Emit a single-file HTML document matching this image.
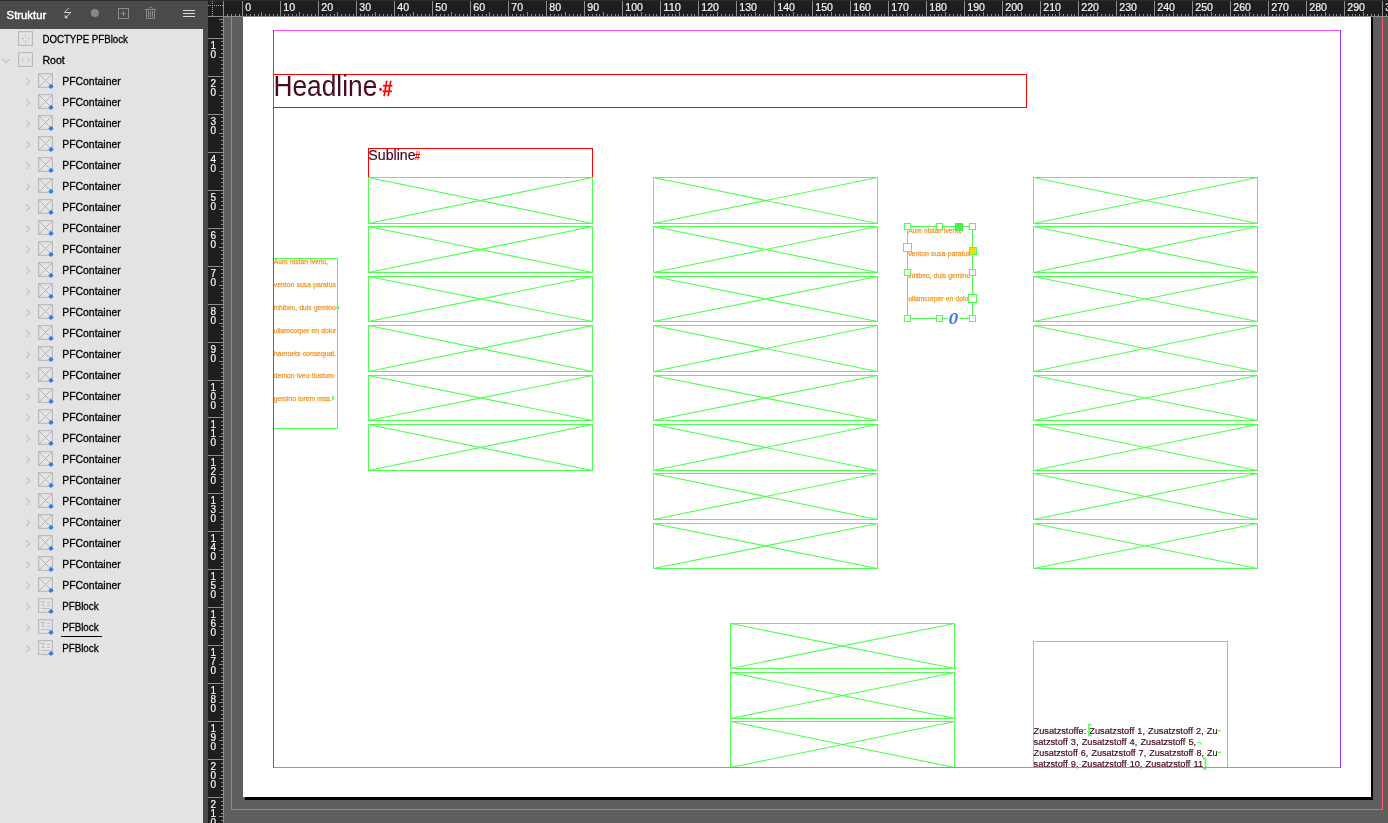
<!DOCTYPE html>
<html><head><meta charset="utf-8"><title>Struktur</title>
<style>
html,body{margin:0;padding:0;background:#5e5e5e}
body{width:1388px;height:823px;overflow:hidden;position:relative}
svg{position:absolute;left:0;top:0;display:block;will-change:transform}
text{font-family:"Liberation Sans",sans-serif}
.c{shape-rendering:crispEdges}
</style></head><body>
<svg width="1388" height="823" viewBox="0 0 1388 823">
<rect class="c" x="0" y="0" width="1388" height="823" fill="#5e5e5e"/>
<rect class="c" x="245" y="17" width="1128" height="783" fill="#000"/>
<rect class="c" x="243" y="0" width="1128" height="797" fill="#fff"/>
<rect class="c" x="231" y="17" width="1" height="793" fill="#ff5a69"/>
<rect class="c" x="1382" y="17" width="1" height="793" fill="#ff5a69"/>
<rect class="c" x="231" y="809" width="1152" height="1" fill="#ff5a69"/>
<rect class="c" x="273.5" y="74.5" width="753" height="33" fill="none" stroke="#ff0000" stroke-width="1"/>
<rect class="c" x="368.5" y="148.5" width="224" height="29" fill="none" stroke="#ff0000" stroke-width="1"/>
<rect class="c" x="368.5" y="177.5" width="224" height="46" fill="none" stroke="#4fff4f" stroke-width="1"/>
<path d="M368.5 177.5L592.5 223.5M368.5 223.5L592.5 177.5" stroke="#4fff4f" stroke-width="1.15" fill="none"/>
<rect class="c" x="368.5" y="226.5" width="224" height="46" fill="none" stroke="#4fff4f" stroke-width="1"/>
<path d="M368.5 226.5L592.5 272.5M368.5 272.5L592.5 226.5" stroke="#4fff4f" stroke-width="1.15" fill="none"/>
<rect class="c" x="368.5" y="276.5" width="224" height="45" fill="none" stroke="#4fff4f" stroke-width="1"/>
<path d="M368.5 276.5L592.5 321.5M368.5 321.5L592.5 276.5" stroke="#4fff4f" stroke-width="1.15" fill="none"/>
<rect class="c" x="368.5" y="325.5" width="224" height="46" fill="none" stroke="#4fff4f" stroke-width="1"/>
<path d="M368.5 325.5L592.5 371.5M368.5 371.5L592.5 325.5" stroke="#4fff4f" stroke-width="1.15" fill="none"/>
<rect class="c" x="368.5" y="375.5" width="224" height="45" fill="none" stroke="#4fff4f" stroke-width="1"/>
<path d="M368.5 375.5L592.5 420.5M368.5 420.5L592.5 375.5" stroke="#4fff4f" stroke-width="1.15" fill="none"/>
<rect class="c" x="368.5" y="424.5" width="224" height="46" fill="none" stroke="#4fff4f" stroke-width="1"/>
<path d="M368.5 424.5L592.5 470.5M368.5 470.5L592.5 424.5" stroke="#4fff4f" stroke-width="1.15" fill="none"/>
<rect class="c" x="653.5" y="177.5" width="224" height="46" fill="none" stroke="#4fff4f" stroke-width="1"/>
<path d="M653.5 177.5L877.5 223.5M653.5 223.5L877.5 177.5" stroke="#4fff4f" stroke-width="1.15" fill="none"/>
<rect class="c" x="653.5" y="226.5" width="224" height="46" fill="none" stroke="#4fff4f" stroke-width="1"/>
<path d="M653.5 226.5L877.5 272.5M653.5 272.5L877.5 226.5" stroke="#4fff4f" stroke-width="1.15" fill="none"/>
<rect class="c" x="653.5" y="276.5" width="224" height="45" fill="none" stroke="#4fff4f" stroke-width="1"/>
<path d="M653.5 276.5L877.5 321.5M653.5 321.5L877.5 276.5" stroke="#4fff4f" stroke-width="1.15" fill="none"/>
<rect class="c" x="653.5" y="325.5" width="224" height="46" fill="none" stroke="#4fff4f" stroke-width="1"/>
<path d="M653.5 325.5L877.5 371.5M653.5 371.5L877.5 325.5" stroke="#4fff4f" stroke-width="1.15" fill="none"/>
<rect class="c" x="653.5" y="375.5" width="224" height="45" fill="none" stroke="#4fff4f" stroke-width="1"/>
<path d="M653.5 375.5L877.5 420.5M653.5 420.5L877.5 375.5" stroke="#4fff4f" stroke-width="1.15" fill="none"/>
<rect class="c" x="653.5" y="424.5" width="224" height="46" fill="none" stroke="#4fff4f" stroke-width="1"/>
<path d="M653.5 424.5L877.5 470.5M653.5 470.5L877.5 424.5" stroke="#4fff4f" stroke-width="1.15" fill="none"/>
<rect class="c" x="653.5" y="473.5" width="224" height="46" fill="none" stroke="#4fff4f" stroke-width="1"/>
<path d="M653.5 473.5L877.5 519.5M653.5 519.5L877.5 473.5" stroke="#4fff4f" stroke-width="1.15" fill="none"/>
<rect class="c" x="653.5" y="523.5" width="224" height="45" fill="none" stroke="#4fff4f" stroke-width="1"/>
<path d="M653.5 523.5L877.5 568.5M653.5 568.5L877.5 523.5" stroke="#4fff4f" stroke-width="1.15" fill="none"/>
<rect class="c" x="1033.5" y="177.5" width="224" height="46" fill="none" stroke="#4fff4f" stroke-width="1"/>
<path d="M1033.5 177.5L1257.5 223.5M1033.5 223.5L1257.5 177.5" stroke="#4fff4f" stroke-width="1.15" fill="none"/>
<rect class="c" x="1033.5" y="226.5" width="224" height="46" fill="none" stroke="#4fff4f" stroke-width="1"/>
<path d="M1033.5 226.5L1257.5 272.5M1033.5 272.5L1257.5 226.5" stroke="#4fff4f" stroke-width="1.15" fill="none"/>
<rect class="c" x="1033.5" y="276.5" width="224" height="45" fill="none" stroke="#4fff4f" stroke-width="1"/>
<path d="M1033.5 276.5L1257.5 321.5M1033.5 321.5L1257.5 276.5" stroke="#4fff4f" stroke-width="1.15" fill="none"/>
<rect class="c" x="1033.5" y="325.5" width="224" height="46" fill="none" stroke="#4fff4f" stroke-width="1"/>
<path d="M1033.5 325.5L1257.5 371.5M1033.5 371.5L1257.5 325.5" stroke="#4fff4f" stroke-width="1.15" fill="none"/>
<rect class="c" x="1033.5" y="375.5" width="224" height="45" fill="none" stroke="#4fff4f" stroke-width="1"/>
<path d="M1033.5 375.5L1257.5 420.5M1033.5 420.5L1257.5 375.5" stroke="#4fff4f" stroke-width="1.15" fill="none"/>
<rect class="c" x="1033.5" y="424.5" width="224" height="46" fill="none" stroke="#4fff4f" stroke-width="1"/>
<path d="M1033.5 424.5L1257.5 470.5M1033.5 470.5L1257.5 424.5" stroke="#4fff4f" stroke-width="1.15" fill="none"/>
<rect class="c" x="1033.5" y="473.5" width="224" height="46" fill="none" stroke="#4fff4f" stroke-width="1"/>
<path d="M1033.5 473.5L1257.5 519.5M1033.5 519.5L1257.5 473.5" stroke="#4fff4f" stroke-width="1.15" fill="none"/>
<rect class="c" x="1033.5" y="523.5" width="224" height="45" fill="none" stroke="#4fff4f" stroke-width="1"/>
<path d="M1033.5 523.5L1257.5 568.5M1033.5 568.5L1257.5 523.5" stroke="#4fff4f" stroke-width="1.15" fill="none"/>
<rect class="c" x="730.5" y="623.5" width="224" height="45" fill="none" stroke="#4fff4f" stroke-width="1"/>
<path d="M730.5 623.5L954.5 668.5M730.5 668.5L954.5 623.5" stroke="#4fff4f" stroke-width="1.15" fill="none"/>
<rect class="c" x="730.5" y="672.5" width="224" height="46" fill="none" stroke="#4fff4f" stroke-width="1"/>
<path d="M730.5 672.5L954.5 718.5M730.5 718.5L954.5 672.5" stroke="#4fff4f" stroke-width="1.15" fill="none"/>
<rect class="c" x="730.5" y="721.5" width="224" height="46" fill="none" stroke="#4fff4f" stroke-width="1"/>
<path d="M730.5 721.5L954.5 767.5M730.5 767.5L954.5 721.5" stroke="#4fff4f" stroke-width="1.15" fill="none"/>
<rect class="c" x="273.5" y="258.5" width="64" height="170" fill="none" stroke="#4fff4f" stroke-width="1"/>
<rect class="c" x="1033.5" y="641.5" width="194" height="126" fill="none" stroke="#4fff4f" stroke-width="1"/>
<text x="273.5" y="95.9" font-size="29.9" fill="#4a0a1f" textLength="103.8" lengthAdjust="spacingAndGlyphs">Headline</text>
<circle cx="380.5" cy="89.5" r="1.45" fill="#ff0000"/>
<text x="382.6" y="95.9" font-size="22.4" font-weight="bold" fill="#ff0000" stroke="#ff0000" stroke-width="0.3" textLength="9.9" lengthAdjust="spacingAndGlyphs">#</text>
<text x="368.3" y="160" font-size="14.8" fill="#4a0a1f" stroke="#4a0a1f" stroke-width="0.2" textLength="47.3" lengthAdjust="spacingAndGlyphs">Subline</text>
<text x="414.7" y="160" font-size="12.7" font-weight="bold" fill="#ff0000" textLength="5.5" lengthAdjust="spacingAndGlyphs">#</text>
<text x="273.8" y="264.1" font-size="6.9" fill="#f2982e" stroke="#f2982e" stroke-width="0.25" textLength="56.6" lengthAdjust="spacingAndGlyphs">Aum<tspan fill="#4fff4f" stroke="none">·</tspan>nistan<tspan fill="#4fff4f" stroke="none">·</tspan>iverio,<tspan fill="#4fff4f" stroke="none">·</tspan></text>
<text x="273.8" y="286.95" font-size="6.9" fill="#f2982e" stroke="#f2982e" stroke-width="0.25" textLength="64.4" lengthAdjust="spacingAndGlyphs">venton<tspan fill="#4fff4f" stroke="none">·</tspan>susa<tspan fill="#4fff4f" stroke="none">·</tspan>paratus<tspan fill="#4fff4f" stroke="none">·</tspan></text>
<text x="273.8" y="309.8" font-size="6.9" fill="#f2982e" stroke="#f2982e" stroke-width="0.25" textLength="62" lengthAdjust="spacingAndGlyphs">inhibeo,<tspan fill="#4fff4f" stroke="none">·</tspan>duis<tspan fill="#4fff4f" stroke="none">·</tspan>gemino</text>
<text x="273.8" y="332.65" font-size="6.9" fill="#f2982e" stroke="#f2982e" stroke-width="0.25" textLength="62.5" lengthAdjust="spacingAndGlyphs">ullamcorper<tspan fill="#4fff4f" stroke="none">·</tspan>en<tspan fill="#4fff4f" stroke="none">·</tspan>dolor</text>
<text x="273.8" y="355.5" font-size="6.9" fill="#f2982e" stroke="#f2982e" stroke-width="0.25" textLength="64.6" lengthAdjust="spacingAndGlyphs">haeroets<tspan fill="#4fff4f" stroke="none">·</tspan>consequat.<tspan fill="#4fff4f" stroke="none">·</tspan></text>
<text x="273.8" y="378.35" font-size="6.9" fill="#f2982e" stroke="#f2982e" stroke-width="0.25" textLength="62.2" lengthAdjust="spacingAndGlyphs">demon<tspan fill="#4fff4f" stroke="none">·</tspan>iveo<tspan fill="#4fff4f" stroke="none">·</tspan>tiustum<tspan fill="#4fff4f" stroke="none">·</tspan></text>
<text x="273.8" y="401.2" font-size="6.9" fill="#f2982e" stroke="#f2982e" stroke-width="0.25" textLength="58.2" lengthAdjust="spacingAndGlyphs">gemino<tspan fill="#4fff4f" stroke="none">·</tspan>lorem<tspan fill="#4fff4f" stroke="none">·</tspan>mas.</text>
<rect x="336.5" y="306.5" width="2.5" height="2.5" fill="#4fff4f"/>
<rect x="332" y="396" width="1.6" height="4" fill="#4fff4f"/>
<text x="908.2" y="232.6" font-size="6.9" fill="#f2982e" stroke="#f2982e" stroke-width="0.25" textLength="53.5" lengthAdjust="spacingAndGlyphs">Aum<tspan fill="#4fff4f" stroke="none">·</tspan>nistan<tspan fill="#4fff4f" stroke="none">·</tspan>iverio,</text>
<text x="908.2" y="255.6" font-size="6.9" fill="#f2982e" stroke="#f2982e" stroke-width="0.25" textLength="62.5" lengthAdjust="spacingAndGlyphs">venton<tspan fill="#4fff4f" stroke="none">·</tspan>susa<tspan fill="#4fff4f" stroke="none">·</tspan>paratus</text>
<text x="908.2" y="278.4" font-size="6.9" fill="#f2982e" stroke="#f2982e" stroke-width="0.25" textLength="62" lengthAdjust="spacingAndGlyphs">inhibeo,<tspan fill="#4fff4f" stroke="none">·</tspan>duis<tspan fill="#4fff4f" stroke="none">·</tspan>gemino</text>
<text x="908.2" y="300.8" font-size="6.9" fill="#f2982e" stroke="#f2982e" stroke-width="0.25" textLength="60" lengthAdjust="spacingAndGlyphs">ullamcorper<tspan fill="#4fff4f" stroke="none">·</tspan>en<tspan fill="#4fff4f" stroke="none">·</tspan>dolo</text>
<rect class="c" x="907.5" y="226.5" width="65" height="92" fill="none" stroke="#4fff4f" stroke-width="1"/>
<rect class="c" x="904.5" y="223.5" width="6" height="6" fill="#fff" stroke="#4fff4f" stroke-width="1"/>
<rect class="c" x="936.5" y="223.5" width="6" height="6" fill="#fff" stroke="#4fff4f" stroke-width="1"/>
<rect class="c" x="969.5" y="223.5" width="6" height="6" fill="#fff" stroke="#4fff4f" stroke-width="1"/>
<rect class="c" x="904.5" y="269.5" width="6" height="6" fill="#fff" stroke="#4fff4f" stroke-width="1"/>
<rect class="c" x="969.5" y="269.5" width="6" height="6" fill="#fff" stroke="#4fff4f" stroke-width="1"/>
<rect class="c" x="904.5" y="315.5" width="6" height="6" fill="#fff" stroke="#4fff4f" stroke-width="1"/>
<rect class="c" x="936.5" y="315.5" width="6" height="6" fill="#fff" stroke="#4fff4f" stroke-width="1"/>
<rect class="c" x="969.5" y="315.5" width="6" height="6" fill="#fff" stroke="#4fff4f" stroke-width="1"/>
<rect class="c" x="903.5" y="243.5" width="8" height="8" fill="#fff" stroke="#4fff4f" stroke-width="1"/>
<rect class="c" x="968.5" y="294.5" width="8" height="8" fill="#fff" stroke="#4fff4f" stroke-width="1"/>
<rect class="c" x="955" y="223" width="8" height="8" fill="#4cf04c"/>
<rect class="c" x="969.5" y="247.5" width="7" height="7" fill="#ffdc00" stroke="#4fff4f" stroke-width="1"/>
<rect x="947" y="314" width="12.5" height="10" fill="#fff"/>
<text x="948.4" y="323.6" font-size="16" font-style="italic" font-weight="bold" textLength="9.8" lengthAdjust="spacingAndGlyphs" style="font-family:'Liberation Serif',serif" fill="#3d7fe0">0</text>
<text x="1033.6" y="734.4" font-size="9.6" fill="#4a0a1f" stroke="#4a0a1f" stroke-width="0.2" textLength="184" lengthAdjust="spacingAndGlyphs">Zusatzstoffe:<tspan fill="#4fff4f" stroke="none">·</tspan>Zusatzstoff<tspan fill="#4fff4f" stroke="none">·</tspan>1,<tspan fill="#4fff4f" stroke="none">·</tspan>Zusatzstoff<tspan fill="#4fff4f" stroke="none">·</tspan>2,<tspan fill="#4fff4f" stroke="none">·</tspan>Zu</text>
<text x="1033.6" y="745.25" font-size="9.6" fill="#4a0a1f" stroke="#4a0a1f" stroke-width="0.2" textLength="162.5" lengthAdjust="spacingAndGlyphs">satzstoff<tspan fill="#4fff4f" stroke="none">·</tspan>3,<tspan fill="#4fff4f" stroke="none">·</tspan>Zusatzstoff<tspan fill="#4fff4f" stroke="none">·</tspan>4,<tspan fill="#4fff4f" stroke="none">·</tspan>Zusatzstoff<tspan fill="#4fff4f" stroke="none">·</tspan>5,</text>
<text x="1033.6" y="756.1" font-size="9.6" fill="#4a0a1f" stroke="#4a0a1f" stroke-width="0.2" textLength="184" lengthAdjust="spacingAndGlyphs">Zusatzstoff<tspan fill="#4fff4f" stroke="none">·</tspan>6,<tspan fill="#4fff4f" stroke="none">·</tspan>Zusatzstoff<tspan fill="#4fff4f" stroke="none">·</tspan>7,<tspan fill="#4fff4f" stroke="none">·</tspan>Zusatzstoff<tspan fill="#4fff4f" stroke="none">·</tspan>8,<tspan fill="#4fff4f" stroke="none">·</tspan>Zu</text>
<text x="1033.6" y="766.95" font-size="9.6" fill="#4a0a1f" stroke="#4a0a1f" stroke-width="0.2" textLength="169.5" lengthAdjust="spacingAndGlyphs">satzstoff<tspan fill="#4fff4f" stroke="none">·</tspan>9,<tspan fill="#4fff4f" stroke="none">·</tspan>Zusatzstoff<tspan fill="#4fff4f" stroke="none">·</tspan>10,<tspan fill="#4fff4f" stroke="none">·</tspan>Zusatzstoff<tspan fill="#4fff4f" stroke="none">·</tspan>11</text>
<path d="M1091.5 724.5H1089V735.5H1091.5" stroke="#4fff4f" stroke-width="1.6" fill="none"/>
<path d="M1203 758.5H1205.5V769H1203" stroke="#4fff4f" stroke-width="1.6" fill="none"/>
<rect x="1218" y="730" width="3" height="1.3" fill="#4fff4f"/>
<rect x="1218" y="751.8" width="3" height="1.3" fill="#4fff4f"/>
<path d="M1197.5 742.5H1201V744.5" stroke="#4fff4f" stroke-width="1" fill="none"/>
<rect class="c" x="273" y="30" width="1068" height="1" fill="#ff4fff"/>
<rect class="c" x="273" y="767" width="1068" height="1" fill="#ff4fff"/>
<rect class="c" x="273" y="30" width="1" height="738" fill="#9933ff"/>
<rect class="c" x="1340" y="30" width="1" height="738" fill="#9933ff"/>
<rect class="c" x="208" y="0" width="1180" height="17" fill="#1e1e1e"/>
<rect class="c" x="208" y="17" width="16" height="806" fill="#1e1e1e"/>
<rect class="c" x="0" y="0" width="1388" height="1" fill="#2d2d2d"/>
<rect class="c" x="227" y="14" width="1" height="3" fill="#8e8e8e"/>
<rect class="c" x="231" y="14" width="1" height="3" fill="#8e8e8e"/>
<rect class="c" x="235" y="14" width="1" height="3" fill="#8e8e8e"/>
<rect class="c" x="239" y="14" width="1" height="3" fill="#8e8e8e"/>
<rect class="c" x="242" y="1" width="1" height="16" fill="#8e8e8e"/>
<text x="245.3" y="11.1" font-size="11.2" fill="#f6f6f6" stroke="#f6f6f6" stroke-width="0.2" textLength="5.9" lengthAdjust="spacingAndGlyphs">0</text>
<rect class="c" x="246" y="14" width="1" height="3" fill="#8e8e8e"/>
<rect class="c" x="250" y="14" width="1" height="3" fill="#8e8e8e"/>
<rect class="c" x="254" y="14" width="1" height="3" fill="#8e8e8e"/>
<rect class="c" x="258" y="14" width="1" height="3" fill="#8e8e8e"/>
<rect class="c" x="261" y="12" width="1" height="5" fill="#8e8e8e"/>
<rect class="c" x="265" y="14" width="1" height="3" fill="#8e8e8e"/>
<rect class="c" x="269" y="14" width="1" height="3" fill="#8e8e8e"/>
<rect class="c" x="273" y="14" width="1" height="3" fill="#8e8e8e"/>
<rect class="c" x="277" y="14" width="1" height="3" fill="#8e8e8e"/>
<rect class="c" x="280" y="1" width="1" height="16" fill="#8e8e8e"/>
<text x="283.3" y="11.1" font-size="11.2" fill="#f6f6f6" stroke="#f6f6f6" stroke-width="0.2" textLength="11.8" lengthAdjust="spacingAndGlyphs">10</text>
<rect class="c" x="284" y="14" width="1" height="3" fill="#8e8e8e"/>
<rect class="c" x="288" y="14" width="1" height="3" fill="#8e8e8e"/>
<rect class="c" x="292" y="14" width="1" height="3" fill="#8e8e8e"/>
<rect class="c" x="296" y="14" width="1" height="3" fill="#8e8e8e"/>
<rect class="c" x="299" y="12" width="1" height="5" fill="#8e8e8e"/>
<rect class="c" x="303" y="14" width="1" height="3" fill="#8e8e8e"/>
<rect class="c" x="307" y="14" width="1" height="3" fill="#8e8e8e"/>
<rect class="c" x="311" y="14" width="1" height="3" fill="#8e8e8e"/>
<rect class="c" x="315" y="14" width="1" height="3" fill="#8e8e8e"/>
<rect class="c" x="318" y="1" width="1" height="16" fill="#8e8e8e"/>
<text x="321.3" y="11.1" font-size="11.2" fill="#f6f6f6" stroke="#f6f6f6" stroke-width="0.2" textLength="11.8" lengthAdjust="spacingAndGlyphs">20</text>
<rect class="c" x="322" y="14" width="1" height="3" fill="#8e8e8e"/>
<rect class="c" x="326" y="14" width="1" height="3" fill="#8e8e8e"/>
<rect class="c" x="330" y="14" width="1" height="3" fill="#8e8e8e"/>
<rect class="c" x="334" y="14" width="1" height="3" fill="#8e8e8e"/>
<rect class="c" x="337" y="12" width="1" height="5" fill="#8e8e8e"/>
<rect class="c" x="341" y="14" width="1" height="3" fill="#8e8e8e"/>
<rect class="c" x="345" y="14" width="1" height="3" fill="#8e8e8e"/>
<rect class="c" x="349" y="14" width="1" height="3" fill="#8e8e8e"/>
<rect class="c" x="353" y="14" width="1" height="3" fill="#8e8e8e"/>
<rect class="c" x="356" y="1" width="1" height="16" fill="#8e8e8e"/>
<text x="359.3" y="11.1" font-size="11.2" fill="#f6f6f6" stroke="#f6f6f6" stroke-width="0.2" textLength="11.8" lengthAdjust="spacingAndGlyphs">30</text>
<rect class="c" x="360" y="14" width="1" height="3" fill="#8e8e8e"/>
<rect class="c" x="364" y="14" width="1" height="3" fill="#8e8e8e"/>
<rect class="c" x="368" y="14" width="1" height="3" fill="#8e8e8e"/>
<rect class="c" x="372" y="14" width="1" height="3" fill="#8e8e8e"/>
<rect class="c" x="375" y="12" width="1" height="5" fill="#8e8e8e"/>
<rect class="c" x="379" y="14" width="1" height="3" fill="#8e8e8e"/>
<rect class="c" x="383" y="14" width="1" height="3" fill="#8e8e8e"/>
<rect class="c" x="387" y="14" width="1" height="3" fill="#8e8e8e"/>
<rect class="c" x="391" y="14" width="1" height="3" fill="#8e8e8e"/>
<rect class="c" x="394" y="1" width="1" height="16" fill="#8e8e8e"/>
<text x="397.3" y="11.1" font-size="11.2" fill="#f6f6f6" stroke="#f6f6f6" stroke-width="0.2" textLength="11.8" lengthAdjust="spacingAndGlyphs">40</text>
<rect class="c" x="398" y="14" width="1" height="3" fill="#8e8e8e"/>
<rect class="c" x="402" y="14" width="1" height="3" fill="#8e8e8e"/>
<rect class="c" x="406" y="14" width="1" height="3" fill="#8e8e8e"/>
<rect class="c" x="410" y="14" width="1" height="3" fill="#8e8e8e"/>
<rect class="c" x="413" y="12" width="1" height="5" fill="#8e8e8e"/>
<rect class="c" x="417" y="14" width="1" height="3" fill="#8e8e8e"/>
<rect class="c" x="421" y="14" width="1" height="3" fill="#8e8e8e"/>
<rect class="c" x="425" y="14" width="1" height="3" fill="#8e8e8e"/>
<rect class="c" x="429" y="14" width="1" height="3" fill="#8e8e8e"/>
<rect class="c" x="432" y="1" width="1" height="16" fill="#8e8e8e"/>
<text x="435.3" y="11.1" font-size="11.2" fill="#f6f6f6" stroke="#f6f6f6" stroke-width="0.2" textLength="11.8" lengthAdjust="spacingAndGlyphs">50</text>
<rect class="c" x="436" y="14" width="1" height="3" fill="#8e8e8e"/>
<rect class="c" x="440" y="14" width="1" height="3" fill="#8e8e8e"/>
<rect class="c" x="444" y="14" width="1" height="3" fill="#8e8e8e"/>
<rect class="c" x="448" y="14" width="1" height="3" fill="#8e8e8e"/>
<rect class="c" x="451" y="12" width="1" height="5" fill="#8e8e8e"/>
<rect class="c" x="455" y="14" width="1" height="3" fill="#8e8e8e"/>
<rect class="c" x="459" y="14" width="1" height="3" fill="#8e8e8e"/>
<rect class="c" x="463" y="14" width="1" height="3" fill="#8e8e8e"/>
<rect class="c" x="467" y="14" width="1" height="3" fill="#8e8e8e"/>
<rect class="c" x="470" y="1" width="1" height="16" fill="#8e8e8e"/>
<text x="473.3" y="11.1" font-size="11.2" fill="#f6f6f6" stroke="#f6f6f6" stroke-width="0.2" textLength="11.8" lengthAdjust="spacingAndGlyphs">60</text>
<rect class="c" x="474" y="14" width="1" height="3" fill="#8e8e8e"/>
<rect class="c" x="478" y="14" width="1" height="3" fill="#8e8e8e"/>
<rect class="c" x="482" y="14" width="1" height="3" fill="#8e8e8e"/>
<rect class="c" x="486" y="14" width="1" height="3" fill="#8e8e8e"/>
<rect class="c" x="489" y="12" width="1" height="5" fill="#8e8e8e"/>
<rect class="c" x="493" y="14" width="1" height="3" fill="#8e8e8e"/>
<rect class="c" x="497" y="14" width="1" height="3" fill="#8e8e8e"/>
<rect class="c" x="501" y="14" width="1" height="3" fill="#8e8e8e"/>
<rect class="c" x="505" y="14" width="1" height="3" fill="#8e8e8e"/>
<rect class="c" x="508" y="1" width="1" height="16" fill="#8e8e8e"/>
<text x="511.3" y="11.1" font-size="11.2" fill="#f6f6f6" stroke="#f6f6f6" stroke-width="0.2" textLength="11.8" lengthAdjust="spacingAndGlyphs">70</text>
<rect class="c" x="512" y="14" width="1" height="3" fill="#8e8e8e"/>
<rect class="c" x="516" y="14" width="1" height="3" fill="#8e8e8e"/>
<rect class="c" x="520" y="14" width="1" height="3" fill="#8e8e8e"/>
<rect class="c" x="523" y="14" width="1" height="3" fill="#8e8e8e"/>
<rect class="c" x="527" y="12" width="1" height="5" fill="#8e8e8e"/>
<rect class="c" x="531" y="14" width="1" height="3" fill="#8e8e8e"/>
<rect class="c" x="535" y="14" width="1" height="3" fill="#8e8e8e"/>
<rect class="c" x="539" y="14" width="1" height="3" fill="#8e8e8e"/>
<rect class="c" x="542" y="14" width="1" height="3" fill="#8e8e8e"/>
<rect class="c" x="546" y="1" width="1" height="16" fill="#8e8e8e"/>
<text x="549.3" y="11.1" font-size="11.2" fill="#f6f6f6" stroke="#f6f6f6" stroke-width="0.2" textLength="11.8" lengthAdjust="spacingAndGlyphs">80</text>
<rect class="c" x="550" y="14" width="1" height="3" fill="#8e8e8e"/>
<rect class="c" x="554" y="14" width="1" height="3" fill="#8e8e8e"/>
<rect class="c" x="558" y="14" width="1" height="3" fill="#8e8e8e"/>
<rect class="c" x="561" y="14" width="1" height="3" fill="#8e8e8e"/>
<rect class="c" x="565" y="12" width="1" height="5" fill="#8e8e8e"/>
<rect class="c" x="569" y="14" width="1" height="3" fill="#8e8e8e"/>
<rect class="c" x="573" y="14" width="1" height="3" fill="#8e8e8e"/>
<rect class="c" x="577" y="14" width="1" height="3" fill="#8e8e8e"/>
<rect class="c" x="580" y="14" width="1" height="3" fill="#8e8e8e"/>
<rect class="c" x="584" y="1" width="1" height="16" fill="#8e8e8e"/>
<text x="587.3" y="11.1" font-size="11.2" fill="#f6f6f6" stroke="#f6f6f6" stroke-width="0.2" textLength="11.8" lengthAdjust="spacingAndGlyphs">90</text>
<rect class="c" x="588" y="14" width="1" height="3" fill="#8e8e8e"/>
<rect class="c" x="592" y="14" width="1" height="3" fill="#8e8e8e"/>
<rect class="c" x="596" y="14" width="1" height="3" fill="#8e8e8e"/>
<rect class="c" x="599" y="14" width="1" height="3" fill="#8e8e8e"/>
<rect class="c" x="603" y="12" width="1" height="5" fill="#8e8e8e"/>
<rect class="c" x="607" y="14" width="1" height="3" fill="#8e8e8e"/>
<rect class="c" x="611" y="14" width="1" height="3" fill="#8e8e8e"/>
<rect class="c" x="615" y="14" width="1" height="3" fill="#8e8e8e"/>
<rect class="c" x="618" y="14" width="1" height="3" fill="#8e8e8e"/>
<rect class="c" x="622" y="1" width="1" height="16" fill="#8e8e8e"/>
<text x="625.3" y="11.1" font-size="11.2" fill="#f6f6f6" stroke="#f6f6f6" stroke-width="0.2" textLength="17.7" lengthAdjust="spacingAndGlyphs">100</text>
<rect class="c" x="626" y="14" width="1" height="3" fill="#8e8e8e"/>
<rect class="c" x="630" y="14" width="1" height="3" fill="#8e8e8e"/>
<rect class="c" x="634" y="14" width="1" height="3" fill="#8e8e8e"/>
<rect class="c" x="637" y="14" width="1" height="3" fill="#8e8e8e"/>
<rect class="c" x="641" y="12" width="1" height="5" fill="#8e8e8e"/>
<rect class="c" x="645" y="14" width="1" height="3" fill="#8e8e8e"/>
<rect class="c" x="649" y="14" width="1" height="3" fill="#8e8e8e"/>
<rect class="c" x="653" y="14" width="1" height="3" fill="#8e8e8e"/>
<rect class="c" x="656" y="14" width="1" height="3" fill="#8e8e8e"/>
<rect class="c" x="660" y="1" width="1" height="16" fill="#8e8e8e"/>
<text x="663.3" y="11.1" font-size="11.2" fill="#f6f6f6" stroke="#f6f6f6" stroke-width="0.2" textLength="17.7" lengthAdjust="spacingAndGlyphs">110</text>
<rect class="c" x="664" y="14" width="1" height="3" fill="#8e8e8e"/>
<rect class="c" x="668" y="14" width="1" height="3" fill="#8e8e8e"/>
<rect class="c" x="672" y="14" width="1" height="3" fill="#8e8e8e"/>
<rect class="c" x="675" y="14" width="1" height="3" fill="#8e8e8e"/>
<rect class="c" x="679" y="12" width="1" height="5" fill="#8e8e8e"/>
<rect class="c" x="683" y="14" width="1" height="3" fill="#8e8e8e"/>
<rect class="c" x="687" y="14" width="1" height="3" fill="#8e8e8e"/>
<rect class="c" x="691" y="14" width="1" height="3" fill="#8e8e8e"/>
<rect class="c" x="694" y="14" width="1" height="3" fill="#8e8e8e"/>
<rect class="c" x="698" y="1" width="1" height="16" fill="#8e8e8e"/>
<text x="701.3" y="11.1" font-size="11.2" fill="#f6f6f6" stroke="#f6f6f6" stroke-width="0.2" textLength="17.7" lengthAdjust="spacingAndGlyphs">120</text>
<rect class="c" x="702" y="14" width="1" height="3" fill="#8e8e8e"/>
<rect class="c" x="706" y="14" width="1" height="3" fill="#8e8e8e"/>
<rect class="c" x="710" y="14" width="1" height="3" fill="#8e8e8e"/>
<rect class="c" x="713" y="14" width="1" height="3" fill="#8e8e8e"/>
<rect class="c" x="717" y="12" width="1" height="5" fill="#8e8e8e"/>
<rect class="c" x="721" y="14" width="1" height="3" fill="#8e8e8e"/>
<rect class="c" x="725" y="14" width="1" height="3" fill="#8e8e8e"/>
<rect class="c" x="729" y="14" width="1" height="3" fill="#8e8e8e"/>
<rect class="c" x="732" y="14" width="1" height="3" fill="#8e8e8e"/>
<rect class="c" x="736" y="1" width="1" height="16" fill="#8e8e8e"/>
<text x="739.3" y="11.1" font-size="11.2" fill="#f6f6f6" stroke="#f6f6f6" stroke-width="0.2" textLength="17.7" lengthAdjust="spacingAndGlyphs">130</text>
<rect class="c" x="740" y="14" width="1" height="3" fill="#8e8e8e"/>
<rect class="c" x="744" y="14" width="1" height="3" fill="#8e8e8e"/>
<rect class="c" x="748" y="14" width="1" height="3" fill="#8e8e8e"/>
<rect class="c" x="751" y="14" width="1" height="3" fill="#8e8e8e"/>
<rect class="c" x="755" y="12" width="1" height="5" fill="#8e8e8e"/>
<rect class="c" x="759" y="14" width="1" height="3" fill="#8e8e8e"/>
<rect class="c" x="763" y="14" width="1" height="3" fill="#8e8e8e"/>
<rect class="c" x="767" y="14" width="1" height="3" fill="#8e8e8e"/>
<rect class="c" x="770" y="14" width="1" height="3" fill="#8e8e8e"/>
<rect class="c" x="774" y="1" width="1" height="16" fill="#8e8e8e"/>
<text x="777.3" y="11.1" font-size="11.2" fill="#f6f6f6" stroke="#f6f6f6" stroke-width="0.2" textLength="17.7" lengthAdjust="spacingAndGlyphs">140</text>
<rect class="c" x="778" y="14" width="1" height="3" fill="#8e8e8e"/>
<rect class="c" x="782" y="14" width="1" height="3" fill="#8e8e8e"/>
<rect class="c" x="786" y="14" width="1" height="3" fill="#8e8e8e"/>
<rect class="c" x="789" y="14" width="1" height="3" fill="#8e8e8e"/>
<rect class="c" x="793" y="12" width="1" height="5" fill="#8e8e8e"/>
<rect class="c" x="797" y="14" width="1" height="3" fill="#8e8e8e"/>
<rect class="c" x="801" y="14" width="1" height="3" fill="#8e8e8e"/>
<rect class="c" x="805" y="14" width="1" height="3" fill="#8e8e8e"/>
<rect class="c" x="808" y="14" width="1" height="3" fill="#8e8e8e"/>
<rect class="c" x="812" y="1" width="1" height="16" fill="#8e8e8e"/>
<text x="815.3" y="11.1" font-size="11.2" fill="#f6f6f6" stroke="#f6f6f6" stroke-width="0.2" textLength="17.7" lengthAdjust="spacingAndGlyphs">150</text>
<rect class="c" x="816" y="14" width="1" height="3" fill="#8e8e8e"/>
<rect class="c" x="820" y="14" width="1" height="3" fill="#8e8e8e"/>
<rect class="c" x="824" y="14" width="1" height="3" fill="#8e8e8e"/>
<rect class="c" x="827" y="14" width="1" height="3" fill="#8e8e8e"/>
<rect class="c" x="831" y="12" width="1" height="5" fill="#8e8e8e"/>
<rect class="c" x="835" y="14" width="1" height="3" fill="#8e8e8e"/>
<rect class="c" x="839" y="14" width="1" height="3" fill="#8e8e8e"/>
<rect class="c" x="843" y="14" width="1" height="3" fill="#8e8e8e"/>
<rect class="c" x="846" y="14" width="1" height="3" fill="#8e8e8e"/>
<rect class="c" x="850" y="1" width="1" height="16" fill="#8e8e8e"/>
<text x="853.3" y="11.1" font-size="11.2" fill="#f6f6f6" stroke="#f6f6f6" stroke-width="0.2" textLength="17.7" lengthAdjust="spacingAndGlyphs">160</text>
<rect class="c" x="854" y="14" width="1" height="3" fill="#8e8e8e"/>
<rect class="c" x="858" y="14" width="1" height="3" fill="#8e8e8e"/>
<rect class="c" x="862" y="14" width="1" height="3" fill="#8e8e8e"/>
<rect class="c" x="865" y="14" width="1" height="3" fill="#8e8e8e"/>
<rect class="c" x="869" y="12" width="1" height="5" fill="#8e8e8e"/>
<rect class="c" x="873" y="14" width="1" height="3" fill="#8e8e8e"/>
<rect class="c" x="877" y="14" width="1" height="3" fill="#8e8e8e"/>
<rect class="c" x="881" y="14" width="1" height="3" fill="#8e8e8e"/>
<rect class="c" x="884" y="14" width="1" height="3" fill="#8e8e8e"/>
<rect class="c" x="888" y="1" width="1" height="16" fill="#8e8e8e"/>
<text x="891.3" y="11.1" font-size="11.2" fill="#f6f6f6" stroke="#f6f6f6" stroke-width="0.2" textLength="17.7" lengthAdjust="spacingAndGlyphs">170</text>
<rect class="c" x="892" y="14" width="1" height="3" fill="#8e8e8e"/>
<rect class="c" x="896" y="14" width="1" height="3" fill="#8e8e8e"/>
<rect class="c" x="900" y="14" width="1" height="3" fill="#8e8e8e"/>
<rect class="c" x="903" y="14" width="1" height="3" fill="#8e8e8e"/>
<rect class="c" x="907" y="12" width="1" height="5" fill="#8e8e8e"/>
<rect class="c" x="911" y="14" width="1" height="3" fill="#8e8e8e"/>
<rect class="c" x="915" y="14" width="1" height="3" fill="#8e8e8e"/>
<rect class="c" x="919" y="14" width="1" height="3" fill="#8e8e8e"/>
<rect class="c" x="922" y="14" width="1" height="3" fill="#8e8e8e"/>
<rect class="c" x="926" y="1" width="1" height="16" fill="#8e8e8e"/>
<text x="929.3" y="11.1" font-size="11.2" fill="#f6f6f6" stroke="#f6f6f6" stroke-width="0.2" textLength="17.7" lengthAdjust="spacingAndGlyphs">180</text>
<rect class="c" x="930" y="14" width="1" height="3" fill="#8e8e8e"/>
<rect class="c" x="934" y="14" width="1" height="3" fill="#8e8e8e"/>
<rect class="c" x="938" y="14" width="1" height="3" fill="#8e8e8e"/>
<rect class="c" x="941" y="14" width="1" height="3" fill="#8e8e8e"/>
<rect class="c" x="945" y="12" width="1" height="5" fill="#8e8e8e"/>
<rect class="c" x="949" y="14" width="1" height="3" fill="#8e8e8e"/>
<rect class="c" x="953" y="14" width="1" height="3" fill="#8e8e8e"/>
<rect class="c" x="957" y="14" width="1" height="3" fill="#8e8e8e"/>
<rect class="c" x="960" y="14" width="1" height="3" fill="#8e8e8e"/>
<rect class="c" x="964" y="1" width="1" height="16" fill="#8e8e8e"/>
<text x="967.3" y="11.1" font-size="11.2" fill="#f6f6f6" stroke="#f6f6f6" stroke-width="0.2" textLength="17.7" lengthAdjust="spacingAndGlyphs">190</text>
<rect class="c" x="968" y="14" width="1" height="3" fill="#8e8e8e"/>
<rect class="c" x="972" y="14" width="1" height="3" fill="#8e8e8e"/>
<rect class="c" x="976" y="14" width="1" height="3" fill="#8e8e8e"/>
<rect class="c" x="979" y="14" width="1" height="3" fill="#8e8e8e"/>
<rect class="c" x="983" y="12" width="1" height="5" fill="#8e8e8e"/>
<rect class="c" x="987" y="14" width="1" height="3" fill="#8e8e8e"/>
<rect class="c" x="991" y="14" width="1" height="3" fill="#8e8e8e"/>
<rect class="c" x="995" y="14" width="1" height="3" fill="#8e8e8e"/>
<rect class="c" x="998" y="14" width="1" height="3" fill="#8e8e8e"/>
<rect class="c" x="1002" y="1" width="1" height="16" fill="#8e8e8e"/>
<text x="1005.3" y="11.1" font-size="11.2" fill="#f6f6f6" stroke="#f6f6f6" stroke-width="0.2" textLength="17.7" lengthAdjust="spacingAndGlyphs">200</text>
<rect class="c" x="1006" y="14" width="1" height="3" fill="#8e8e8e"/>
<rect class="c" x="1010" y="14" width="1" height="3" fill="#8e8e8e"/>
<rect class="c" x="1014" y="14" width="1" height="3" fill="#8e8e8e"/>
<rect class="c" x="1017" y="14" width="1" height="3" fill="#8e8e8e"/>
<rect class="c" x="1021" y="12" width="1" height="5" fill="#8e8e8e"/>
<rect class="c" x="1025" y="14" width="1" height="3" fill="#8e8e8e"/>
<rect class="c" x="1029" y="14" width="1" height="3" fill="#8e8e8e"/>
<rect class="c" x="1033" y="14" width="1" height="3" fill="#8e8e8e"/>
<rect class="c" x="1036" y="14" width="1" height="3" fill="#8e8e8e"/>
<rect class="c" x="1040" y="1" width="1" height="16" fill="#8e8e8e"/>
<text x="1043.3" y="11.1" font-size="11.2" fill="#f6f6f6" stroke="#f6f6f6" stroke-width="0.2" textLength="17.7" lengthAdjust="spacingAndGlyphs">210</text>
<rect class="c" x="1044" y="14" width="1" height="3" fill="#8e8e8e"/>
<rect class="c" x="1048" y="14" width="1" height="3" fill="#8e8e8e"/>
<rect class="c" x="1052" y="14" width="1" height="3" fill="#8e8e8e"/>
<rect class="c" x="1055" y="14" width="1" height="3" fill="#8e8e8e"/>
<rect class="c" x="1059" y="12" width="1" height="5" fill="#8e8e8e"/>
<rect class="c" x="1063" y="14" width="1" height="3" fill="#8e8e8e"/>
<rect class="c" x="1067" y="14" width="1" height="3" fill="#8e8e8e"/>
<rect class="c" x="1071" y="14" width="1" height="3" fill="#8e8e8e"/>
<rect class="c" x="1074" y="14" width="1" height="3" fill="#8e8e8e"/>
<rect class="c" x="1078" y="1" width="1" height="16" fill="#8e8e8e"/>
<text x="1081.3" y="11.1" font-size="11.2" fill="#f6f6f6" stroke="#f6f6f6" stroke-width="0.2" textLength="17.7" lengthAdjust="spacingAndGlyphs">220</text>
<rect class="c" x="1082" y="14" width="1" height="3" fill="#8e8e8e"/>
<rect class="c" x="1086" y="14" width="1" height="3" fill="#8e8e8e"/>
<rect class="c" x="1090" y="14" width="1" height="3" fill="#8e8e8e"/>
<rect class="c" x="1093" y="14" width="1" height="3" fill="#8e8e8e"/>
<rect class="c" x="1097" y="12" width="1" height="5" fill="#8e8e8e"/>
<rect class="c" x="1101" y="14" width="1" height="3" fill="#8e8e8e"/>
<rect class="c" x="1105" y="14" width="1" height="3" fill="#8e8e8e"/>
<rect class="c" x="1109" y="14" width="1" height="3" fill="#8e8e8e"/>
<rect class="c" x="1112" y="14" width="1" height="3" fill="#8e8e8e"/>
<rect class="c" x="1116" y="1" width="1" height="16" fill="#8e8e8e"/>
<text x="1119.3" y="11.1" font-size="11.2" fill="#f6f6f6" stroke="#f6f6f6" stroke-width="0.2" textLength="17.7" lengthAdjust="spacingAndGlyphs">230</text>
<rect class="c" x="1120" y="14" width="1" height="3" fill="#8e8e8e"/>
<rect class="c" x="1124" y="14" width="1" height="3" fill="#8e8e8e"/>
<rect class="c" x="1128" y="14" width="1" height="3" fill="#8e8e8e"/>
<rect class="c" x="1131" y="14" width="1" height="3" fill="#8e8e8e"/>
<rect class="c" x="1135" y="12" width="1" height="5" fill="#8e8e8e"/>
<rect class="c" x="1139" y="14" width="1" height="3" fill="#8e8e8e"/>
<rect class="c" x="1143" y="14" width="1" height="3" fill="#8e8e8e"/>
<rect class="c" x="1147" y="14" width="1" height="3" fill="#8e8e8e"/>
<rect class="c" x="1150" y="14" width="1" height="3" fill="#8e8e8e"/>
<rect class="c" x="1154" y="1" width="1" height="16" fill="#8e8e8e"/>
<text x="1157.3" y="11.1" font-size="11.2" fill="#f6f6f6" stroke="#f6f6f6" stroke-width="0.2" textLength="17.7" lengthAdjust="spacingAndGlyphs">240</text>
<rect class="c" x="1158" y="14" width="1" height="3" fill="#8e8e8e"/>
<rect class="c" x="1162" y="14" width="1" height="3" fill="#8e8e8e"/>
<rect class="c" x="1166" y="14" width="1" height="3" fill="#8e8e8e"/>
<rect class="c" x="1169" y="14" width="1" height="3" fill="#8e8e8e"/>
<rect class="c" x="1173" y="12" width="1" height="5" fill="#8e8e8e"/>
<rect class="c" x="1177" y="14" width="1" height="3" fill="#8e8e8e"/>
<rect class="c" x="1181" y="14" width="1" height="3" fill="#8e8e8e"/>
<rect class="c" x="1185" y="14" width="1" height="3" fill="#8e8e8e"/>
<rect class="c" x="1188" y="14" width="1" height="3" fill="#8e8e8e"/>
<rect class="c" x="1192" y="1" width="1" height="16" fill="#8e8e8e"/>
<text x="1195.3" y="11.1" font-size="11.2" fill="#f6f6f6" stroke="#f6f6f6" stroke-width="0.2" textLength="17.7" lengthAdjust="spacingAndGlyphs">250</text>
<rect class="c" x="1196" y="14" width="1" height="3" fill="#8e8e8e"/>
<rect class="c" x="1200" y="14" width="1" height="3" fill="#8e8e8e"/>
<rect class="c" x="1204" y="14" width="1" height="3" fill="#8e8e8e"/>
<rect class="c" x="1207" y="14" width="1" height="3" fill="#8e8e8e"/>
<rect class="c" x="1211" y="12" width="1" height="5" fill="#8e8e8e"/>
<rect class="c" x="1215" y="14" width="1" height="3" fill="#8e8e8e"/>
<rect class="c" x="1219" y="14" width="1" height="3" fill="#8e8e8e"/>
<rect class="c" x="1223" y="14" width="1" height="3" fill="#8e8e8e"/>
<rect class="c" x="1226" y="14" width="1" height="3" fill="#8e8e8e"/>
<rect class="c" x="1230" y="1" width="1" height="16" fill="#8e8e8e"/>
<text x="1233.3" y="11.1" font-size="11.2" fill="#f6f6f6" stroke="#f6f6f6" stroke-width="0.2" textLength="17.7" lengthAdjust="spacingAndGlyphs">260</text>
<rect class="c" x="1234" y="14" width="1" height="3" fill="#8e8e8e"/>
<rect class="c" x="1238" y="14" width="1" height="3" fill="#8e8e8e"/>
<rect class="c" x="1242" y="14" width="1" height="3" fill="#8e8e8e"/>
<rect class="c" x="1245" y="14" width="1" height="3" fill="#8e8e8e"/>
<rect class="c" x="1249" y="12" width="1" height="5" fill="#8e8e8e"/>
<rect class="c" x="1253" y="14" width="1" height="3" fill="#8e8e8e"/>
<rect class="c" x="1257" y="14" width="1" height="3" fill="#8e8e8e"/>
<rect class="c" x="1261" y="14" width="1" height="3" fill="#8e8e8e"/>
<rect class="c" x="1264" y="14" width="1" height="3" fill="#8e8e8e"/>
<rect class="c" x="1268" y="1" width="1" height="16" fill="#8e8e8e"/>
<text x="1271.3" y="11.1" font-size="11.2" fill="#f6f6f6" stroke="#f6f6f6" stroke-width="0.2" textLength="17.7" lengthAdjust="spacingAndGlyphs">270</text>
<rect class="c" x="1272" y="14" width="1" height="3" fill="#8e8e8e"/>
<rect class="c" x="1276" y="14" width="1" height="3" fill="#8e8e8e"/>
<rect class="c" x="1279" y="14" width="1" height="3" fill="#8e8e8e"/>
<rect class="c" x="1283" y="14" width="1" height="3" fill="#8e8e8e"/>
<rect class="c" x="1287" y="12" width="1" height="5" fill="#8e8e8e"/>
<rect class="c" x="1291" y="14" width="1" height="3" fill="#8e8e8e"/>
<rect class="c" x="1295" y="14" width="1" height="3" fill="#8e8e8e"/>
<rect class="c" x="1298" y="14" width="1" height="3" fill="#8e8e8e"/>
<rect class="c" x="1302" y="14" width="1" height="3" fill="#8e8e8e"/>
<rect class="c" x="1306" y="1" width="1" height="16" fill="#8e8e8e"/>
<text x="1309.3" y="11.1" font-size="11.2" fill="#f6f6f6" stroke="#f6f6f6" stroke-width="0.2" textLength="17.7" lengthAdjust="spacingAndGlyphs">280</text>
<rect class="c" x="1310" y="14" width="1" height="3" fill="#8e8e8e"/>
<rect class="c" x="1314" y="14" width="1" height="3" fill="#8e8e8e"/>
<rect class="c" x="1317" y="14" width="1" height="3" fill="#8e8e8e"/>
<rect class="c" x="1321" y="14" width="1" height="3" fill="#8e8e8e"/>
<rect class="c" x="1325" y="12" width="1" height="5" fill="#8e8e8e"/>
<rect class="c" x="1329" y="14" width="1" height="3" fill="#8e8e8e"/>
<rect class="c" x="1333" y="14" width="1" height="3" fill="#8e8e8e"/>
<rect class="c" x="1336" y="14" width="1" height="3" fill="#8e8e8e"/>
<rect class="c" x="1340" y="14" width="1" height="3" fill="#8e8e8e"/>
<rect class="c" x="1344" y="1" width="1" height="16" fill="#8e8e8e"/>
<text x="1347.3" y="11.1" font-size="11.2" fill="#f6f6f6" stroke="#f6f6f6" stroke-width="0.2" textLength="17.7" lengthAdjust="spacingAndGlyphs">290</text>
<rect class="c" x="1348" y="14" width="1" height="3" fill="#8e8e8e"/>
<rect class="c" x="1352" y="14" width="1" height="3" fill="#8e8e8e"/>
<rect class="c" x="1355" y="14" width="1" height="3" fill="#8e8e8e"/>
<rect class="c" x="1359" y="14" width="1" height="3" fill="#8e8e8e"/>
<rect class="c" x="1363" y="12" width="1" height="5" fill="#8e8e8e"/>
<rect class="c" x="1367" y="14" width="1" height="3" fill="#8e8e8e"/>
<rect class="c" x="1371" y="14" width="1" height="3" fill="#8e8e8e"/>
<rect class="c" x="1374" y="14" width="1" height="3" fill="#8e8e8e"/>
<rect class="c" x="1378" y="14" width="1" height="3" fill="#8e8e8e"/>
<rect class="c" x="1382" y="1" width="1" height="16" fill="#8e8e8e"/>
<text x="1385.3" y="11.1" font-size="11.2" fill="#f6f6f6" stroke="#f6f6f6" stroke-width="0.2" textLength="17.7" lengthAdjust="spacingAndGlyphs">300</text>
<rect class="c" x="1386" y="14" width="1" height="3" fill="#8e8e8e"/>
<rect class="c" x="208" y="16" width="1180" height="1" fill="#8e8e8e"/>
<rect class="c" x="219" y="19" width="5" height="1" fill="#8e8e8e"/>
<rect class="c" x="221" y="22" width="3" height="1" fill="#8e8e8e"/>
<rect class="c" x="221" y="26" width="3" height="1" fill="#8e8e8e"/>
<rect class="c" x="221" y="30" width="3" height="1" fill="#8e8e8e"/>
<rect class="c" x="221" y="34" width="3" height="1" fill="#8e8e8e"/>
<rect class="c" x="208" y="38" width="16" height="1" fill="#8e8e8e"/>
<text x="210.4" y="48.5" font-size="10" fill="#f6f6f6" stroke="#f6f6f6" stroke-width="0.2">1</text>
<text x="210.4" y="57.9" font-size="10" fill="#f6f6f6" stroke="#f6f6f6" stroke-width="0.2">0</text>
<rect class="c" x="221" y="41" width="3" height="1" fill="#8e8e8e"/>
<rect class="c" x="221" y="45" width="3" height="1" fill="#8e8e8e"/>
<rect class="c" x="221" y="49" width="3" height="1" fill="#8e8e8e"/>
<rect class="c" x="221" y="53" width="3" height="1" fill="#8e8e8e"/>
<rect class="c" x="219" y="57" width="5" height="1" fill="#8e8e8e"/>
<rect class="c" x="221" y="60" width="3" height="1" fill="#8e8e8e"/>
<rect class="c" x="221" y="64" width="3" height="1" fill="#8e8e8e"/>
<rect class="c" x="221" y="68" width="3" height="1" fill="#8e8e8e"/>
<rect class="c" x="221" y="72" width="3" height="1" fill="#8e8e8e"/>
<rect class="c" x="208" y="76" width="16" height="1" fill="#8e8e8e"/>
<text x="210.4" y="86.5" font-size="10" fill="#f6f6f6" stroke="#f6f6f6" stroke-width="0.2">2</text>
<text x="210.4" y="95.9" font-size="10" fill="#f6f6f6" stroke="#f6f6f6" stroke-width="0.2">0</text>
<rect class="c" x="221" y="79" width="3" height="1" fill="#8e8e8e"/>
<rect class="c" x="221" y="83" width="3" height="1" fill="#8e8e8e"/>
<rect class="c" x="221" y="87" width="3" height="1" fill="#8e8e8e"/>
<rect class="c" x="221" y="91" width="3" height="1" fill="#8e8e8e"/>
<rect class="c" x="219" y="95" width="5" height="1" fill="#8e8e8e"/>
<rect class="c" x="221" y="98" width="3" height="1" fill="#8e8e8e"/>
<rect class="c" x="221" y="102" width="3" height="1" fill="#8e8e8e"/>
<rect class="c" x="221" y="106" width="3" height="1" fill="#8e8e8e"/>
<rect class="c" x="221" y="110" width="3" height="1" fill="#8e8e8e"/>
<rect class="c" x="208" y="114" width="16" height="1" fill="#8e8e8e"/>
<text x="210.4" y="124.5" font-size="10" fill="#f6f6f6" stroke="#f6f6f6" stroke-width="0.2">3</text>
<text x="210.4" y="133.9" font-size="10" fill="#f6f6f6" stroke="#f6f6f6" stroke-width="0.2">0</text>
<rect class="c" x="221" y="117" width="3" height="1" fill="#8e8e8e"/>
<rect class="c" x="221" y="121" width="3" height="1" fill="#8e8e8e"/>
<rect class="c" x="221" y="125" width="3" height="1" fill="#8e8e8e"/>
<rect class="c" x="221" y="129" width="3" height="1" fill="#8e8e8e"/>
<rect class="c" x="219" y="133" width="5" height="1" fill="#8e8e8e"/>
<rect class="c" x="221" y="136" width="3" height="1" fill="#8e8e8e"/>
<rect class="c" x="221" y="140" width="3" height="1" fill="#8e8e8e"/>
<rect class="c" x="221" y="144" width="3" height="1" fill="#8e8e8e"/>
<rect class="c" x="221" y="148" width="3" height="1" fill="#8e8e8e"/>
<rect class="c" x="208" y="152" width="16" height="1" fill="#8e8e8e"/>
<text x="210.4" y="162.5" font-size="10" fill="#f6f6f6" stroke="#f6f6f6" stroke-width="0.2">4</text>
<text x="210.4" y="171.9" font-size="10" fill="#f6f6f6" stroke="#f6f6f6" stroke-width="0.2">0</text>
<rect class="c" x="221" y="155" width="3" height="1" fill="#8e8e8e"/>
<rect class="c" x="221" y="159" width="3" height="1" fill="#8e8e8e"/>
<rect class="c" x="221" y="163" width="3" height="1" fill="#8e8e8e"/>
<rect class="c" x="221" y="167" width="3" height="1" fill="#8e8e8e"/>
<rect class="c" x="219" y="171" width="5" height="1" fill="#8e8e8e"/>
<rect class="c" x="221" y="174" width="3" height="1" fill="#8e8e8e"/>
<rect class="c" x="221" y="178" width="3" height="1" fill="#8e8e8e"/>
<rect class="c" x="221" y="182" width="3" height="1" fill="#8e8e8e"/>
<rect class="c" x="221" y="186" width="3" height="1" fill="#8e8e8e"/>
<rect class="c" x="208" y="190" width="16" height="1" fill="#8e8e8e"/>
<text x="210.4" y="200.5" font-size="10" fill="#f6f6f6" stroke="#f6f6f6" stroke-width="0.2">5</text>
<text x="210.4" y="209.9" font-size="10" fill="#f6f6f6" stroke="#f6f6f6" stroke-width="0.2">0</text>
<rect class="c" x="221" y="193" width="3" height="1" fill="#8e8e8e"/>
<rect class="c" x="221" y="197" width="3" height="1" fill="#8e8e8e"/>
<rect class="c" x="221" y="201" width="3" height="1" fill="#8e8e8e"/>
<rect class="c" x="221" y="205" width="3" height="1" fill="#8e8e8e"/>
<rect class="c" x="219" y="209" width="5" height="1" fill="#8e8e8e"/>
<rect class="c" x="221" y="212" width="3" height="1" fill="#8e8e8e"/>
<rect class="c" x="221" y="216" width="3" height="1" fill="#8e8e8e"/>
<rect class="c" x="221" y="220" width="3" height="1" fill="#8e8e8e"/>
<rect class="c" x="221" y="224" width="3" height="1" fill="#8e8e8e"/>
<rect class="c" x="208" y="228" width="16" height="1" fill="#8e8e8e"/>
<text x="210.4" y="238.5" font-size="10" fill="#f6f6f6" stroke="#f6f6f6" stroke-width="0.2">6</text>
<text x="210.4" y="247.9" font-size="10" fill="#f6f6f6" stroke="#f6f6f6" stroke-width="0.2">0</text>
<rect class="c" x="221" y="231" width="3" height="1" fill="#8e8e8e"/>
<rect class="c" x="221" y="235" width="3" height="1" fill="#8e8e8e"/>
<rect class="c" x="221" y="239" width="3" height="1" fill="#8e8e8e"/>
<rect class="c" x="221" y="243" width="3" height="1" fill="#8e8e8e"/>
<rect class="c" x="219" y="247" width="5" height="1" fill="#8e8e8e"/>
<rect class="c" x="221" y="250" width="3" height="1" fill="#8e8e8e"/>
<rect class="c" x="221" y="254" width="3" height="1" fill="#8e8e8e"/>
<rect class="c" x="221" y="258" width="3" height="1" fill="#8e8e8e"/>
<rect class="c" x="221" y="262" width="3" height="1" fill="#8e8e8e"/>
<rect class="c" x="208" y="266" width="16" height="1" fill="#8e8e8e"/>
<text x="210.4" y="276.5" font-size="10" fill="#f6f6f6" stroke="#f6f6f6" stroke-width="0.2">7</text>
<text x="210.4" y="285.9" font-size="10" fill="#f6f6f6" stroke="#f6f6f6" stroke-width="0.2">0</text>
<rect class="c" x="221" y="269" width="3" height="1" fill="#8e8e8e"/>
<rect class="c" x="221" y="273" width="3" height="1" fill="#8e8e8e"/>
<rect class="c" x="221" y="277" width="3" height="1" fill="#8e8e8e"/>
<rect class="c" x="221" y="281" width="3" height="1" fill="#8e8e8e"/>
<rect class="c" x="219" y="285" width="5" height="1" fill="#8e8e8e"/>
<rect class="c" x="221" y="288" width="3" height="1" fill="#8e8e8e"/>
<rect class="c" x="221" y="292" width="3" height="1" fill="#8e8e8e"/>
<rect class="c" x="221" y="296" width="3" height="1" fill="#8e8e8e"/>
<rect class="c" x="221" y="300" width="3" height="1" fill="#8e8e8e"/>
<rect class="c" x="208" y="304" width="16" height="1" fill="#8e8e8e"/>
<text x="210.4" y="314.5" font-size="10" fill="#f6f6f6" stroke="#f6f6f6" stroke-width="0.2">8</text>
<text x="210.4" y="323.9" font-size="10" fill="#f6f6f6" stroke="#f6f6f6" stroke-width="0.2">0</text>
<rect class="c" x="221" y="307" width="3" height="1" fill="#8e8e8e"/>
<rect class="c" x="221" y="311" width="3" height="1" fill="#8e8e8e"/>
<rect class="c" x="221" y="315" width="3" height="1" fill="#8e8e8e"/>
<rect class="c" x="221" y="319" width="3" height="1" fill="#8e8e8e"/>
<rect class="c" x="219" y="323" width="5" height="1" fill="#8e8e8e"/>
<rect class="c" x="221" y="326" width="3" height="1" fill="#8e8e8e"/>
<rect class="c" x="221" y="330" width="3" height="1" fill="#8e8e8e"/>
<rect class="c" x="221" y="334" width="3" height="1" fill="#8e8e8e"/>
<rect class="c" x="221" y="338" width="3" height="1" fill="#8e8e8e"/>
<rect class="c" x="208" y="342" width="16" height="1" fill="#8e8e8e"/>
<text x="210.4" y="352.5" font-size="10" fill="#f6f6f6" stroke="#f6f6f6" stroke-width="0.2">9</text>
<text x="210.4" y="361.9" font-size="10" fill="#f6f6f6" stroke="#f6f6f6" stroke-width="0.2">0</text>
<rect class="c" x="221" y="345" width="3" height="1" fill="#8e8e8e"/>
<rect class="c" x="221" y="349" width="3" height="1" fill="#8e8e8e"/>
<rect class="c" x="221" y="353" width="3" height="1" fill="#8e8e8e"/>
<rect class="c" x="221" y="357" width="3" height="1" fill="#8e8e8e"/>
<rect class="c" x="219" y="361" width="5" height="1" fill="#8e8e8e"/>
<rect class="c" x="221" y="364" width="3" height="1" fill="#8e8e8e"/>
<rect class="c" x="221" y="368" width="3" height="1" fill="#8e8e8e"/>
<rect class="c" x="221" y="372" width="3" height="1" fill="#8e8e8e"/>
<rect class="c" x="221" y="376" width="3" height="1" fill="#8e8e8e"/>
<rect class="c" x="208" y="380" width="16" height="1" fill="#8e8e8e"/>
<text x="210.4" y="390.5" font-size="10" fill="#f6f6f6" stroke="#f6f6f6" stroke-width="0.2">1</text>
<text x="210.4" y="399.9" font-size="10" fill="#f6f6f6" stroke="#f6f6f6" stroke-width="0.2">0</text>
<text x="210.4" y="409.3" font-size="10" fill="#f6f6f6" stroke="#f6f6f6" stroke-width="0.2">0</text>
<rect class="c" x="221" y="383" width="3" height="1" fill="#8e8e8e"/>
<rect class="c" x="221" y="387" width="3" height="1" fill="#8e8e8e"/>
<rect class="c" x="221" y="391" width="3" height="1" fill="#8e8e8e"/>
<rect class="c" x="221" y="395" width="3" height="1" fill="#8e8e8e"/>
<rect class="c" x="219" y="398" width="5" height="1" fill="#8e8e8e"/>
<rect class="c" x="221" y="402" width="3" height="1" fill="#8e8e8e"/>
<rect class="c" x="221" y="406" width="3" height="1" fill="#8e8e8e"/>
<rect class="c" x="221" y="410" width="3" height="1" fill="#8e8e8e"/>
<rect class="c" x="221" y="414" width="3" height="1" fill="#8e8e8e"/>
<rect class="c" x="208" y="417" width="16" height="1" fill="#8e8e8e"/>
<text x="210.4" y="427.5" font-size="10" fill="#f6f6f6" stroke="#f6f6f6" stroke-width="0.2">1</text>
<text x="210.4" y="436.9" font-size="10" fill="#f6f6f6" stroke="#f6f6f6" stroke-width="0.2">1</text>
<text x="210.4" y="446.3" font-size="10" fill="#f6f6f6" stroke="#f6f6f6" stroke-width="0.2">0</text>
<rect class="c" x="221" y="421" width="3" height="1" fill="#8e8e8e"/>
<rect class="c" x="221" y="425" width="3" height="1" fill="#8e8e8e"/>
<rect class="c" x="221" y="429" width="3" height="1" fill="#8e8e8e"/>
<rect class="c" x="221" y="433" width="3" height="1" fill="#8e8e8e"/>
<rect class="c" x="219" y="436" width="5" height="1" fill="#8e8e8e"/>
<rect class="c" x="221" y="440" width="3" height="1" fill="#8e8e8e"/>
<rect class="c" x="221" y="444" width="3" height="1" fill="#8e8e8e"/>
<rect class="c" x="221" y="448" width="3" height="1" fill="#8e8e8e"/>
<rect class="c" x="221" y="452" width="3" height="1" fill="#8e8e8e"/>
<rect class="c" x="208" y="455" width="16" height="1" fill="#8e8e8e"/>
<text x="210.4" y="465.5" font-size="10" fill="#f6f6f6" stroke="#f6f6f6" stroke-width="0.2">1</text>
<text x="210.4" y="474.9" font-size="10" fill="#f6f6f6" stroke="#f6f6f6" stroke-width="0.2">2</text>
<text x="210.4" y="484.3" font-size="10" fill="#f6f6f6" stroke="#f6f6f6" stroke-width="0.2">0</text>
<rect class="c" x="221" y="459" width="3" height="1" fill="#8e8e8e"/>
<rect class="c" x="221" y="463" width="3" height="1" fill="#8e8e8e"/>
<rect class="c" x="221" y="467" width="3" height="1" fill="#8e8e8e"/>
<rect class="c" x="221" y="471" width="3" height="1" fill="#8e8e8e"/>
<rect class="c" x="219" y="474" width="5" height="1" fill="#8e8e8e"/>
<rect class="c" x="221" y="478" width="3" height="1" fill="#8e8e8e"/>
<rect class="c" x="221" y="482" width="3" height="1" fill="#8e8e8e"/>
<rect class="c" x="221" y="486" width="3" height="1" fill="#8e8e8e"/>
<rect class="c" x="221" y="490" width="3" height="1" fill="#8e8e8e"/>
<rect class="c" x="208" y="493" width="16" height="1" fill="#8e8e8e"/>
<text x="210.4" y="503.5" font-size="10" fill="#f6f6f6" stroke="#f6f6f6" stroke-width="0.2">1</text>
<text x="210.4" y="512.9" font-size="10" fill="#f6f6f6" stroke="#f6f6f6" stroke-width="0.2">3</text>
<text x="210.4" y="522.3" font-size="10" fill="#f6f6f6" stroke="#f6f6f6" stroke-width="0.2">0</text>
<rect class="c" x="221" y="497" width="3" height="1" fill="#8e8e8e"/>
<rect class="c" x="221" y="501" width="3" height="1" fill="#8e8e8e"/>
<rect class="c" x="221" y="505" width="3" height="1" fill="#8e8e8e"/>
<rect class="c" x="221" y="509" width="3" height="1" fill="#8e8e8e"/>
<rect class="c" x="219" y="512" width="5" height="1" fill="#8e8e8e"/>
<rect class="c" x="221" y="516" width="3" height="1" fill="#8e8e8e"/>
<rect class="c" x="221" y="520" width="3" height="1" fill="#8e8e8e"/>
<rect class="c" x="221" y="524" width="3" height="1" fill="#8e8e8e"/>
<rect class="c" x="221" y="528" width="3" height="1" fill="#8e8e8e"/>
<rect class="c" x="208" y="531" width="16" height="1" fill="#8e8e8e"/>
<text x="210.4" y="541.5" font-size="10" fill="#f6f6f6" stroke="#f6f6f6" stroke-width="0.2">1</text>
<text x="210.4" y="550.9" font-size="10" fill="#f6f6f6" stroke="#f6f6f6" stroke-width="0.2">4</text>
<text x="210.4" y="560.3" font-size="10" fill="#f6f6f6" stroke="#f6f6f6" stroke-width="0.2">0</text>
<rect class="c" x="221" y="535" width="3" height="1" fill="#8e8e8e"/>
<rect class="c" x="221" y="539" width="3" height="1" fill="#8e8e8e"/>
<rect class="c" x="221" y="543" width="3" height="1" fill="#8e8e8e"/>
<rect class="c" x="221" y="547" width="3" height="1" fill="#8e8e8e"/>
<rect class="c" x="219" y="550" width="5" height="1" fill="#8e8e8e"/>
<rect class="c" x="221" y="554" width="3" height="1" fill="#8e8e8e"/>
<rect class="c" x="221" y="558" width="3" height="1" fill="#8e8e8e"/>
<rect class="c" x="221" y="562" width="3" height="1" fill="#8e8e8e"/>
<rect class="c" x="221" y="566" width="3" height="1" fill="#8e8e8e"/>
<rect class="c" x="208" y="569" width="16" height="1" fill="#8e8e8e"/>
<text x="210.4" y="579.5" font-size="10" fill="#f6f6f6" stroke="#f6f6f6" stroke-width="0.2">1</text>
<text x="210.4" y="588.9" font-size="10" fill="#f6f6f6" stroke="#f6f6f6" stroke-width="0.2">5</text>
<text x="210.4" y="598.3" font-size="10" fill="#f6f6f6" stroke="#f6f6f6" stroke-width="0.2">0</text>
<rect class="c" x="221" y="573" width="3" height="1" fill="#8e8e8e"/>
<rect class="c" x="221" y="577" width="3" height="1" fill="#8e8e8e"/>
<rect class="c" x="221" y="581" width="3" height="1" fill="#8e8e8e"/>
<rect class="c" x="221" y="585" width="3" height="1" fill="#8e8e8e"/>
<rect class="c" x="219" y="588" width="5" height="1" fill="#8e8e8e"/>
<rect class="c" x="221" y="592" width="3" height="1" fill="#8e8e8e"/>
<rect class="c" x="221" y="596" width="3" height="1" fill="#8e8e8e"/>
<rect class="c" x="221" y="600" width="3" height="1" fill="#8e8e8e"/>
<rect class="c" x="221" y="604" width="3" height="1" fill="#8e8e8e"/>
<rect class="c" x="208" y="607" width="16" height="1" fill="#8e8e8e"/>
<text x="210.4" y="617.5" font-size="10" fill="#f6f6f6" stroke="#f6f6f6" stroke-width="0.2">1</text>
<text x="210.4" y="626.9" font-size="10" fill="#f6f6f6" stroke="#f6f6f6" stroke-width="0.2">6</text>
<text x="210.4" y="636.3" font-size="10" fill="#f6f6f6" stroke="#f6f6f6" stroke-width="0.2">0</text>
<rect class="c" x="221" y="611" width="3" height="1" fill="#8e8e8e"/>
<rect class="c" x="221" y="615" width="3" height="1" fill="#8e8e8e"/>
<rect class="c" x="221" y="619" width="3" height="1" fill="#8e8e8e"/>
<rect class="c" x="221" y="623" width="3" height="1" fill="#8e8e8e"/>
<rect class="c" x="219" y="626" width="5" height="1" fill="#8e8e8e"/>
<rect class="c" x="221" y="630" width="3" height="1" fill="#8e8e8e"/>
<rect class="c" x="221" y="634" width="3" height="1" fill="#8e8e8e"/>
<rect class="c" x="221" y="638" width="3" height="1" fill="#8e8e8e"/>
<rect class="c" x="221" y="642" width="3" height="1" fill="#8e8e8e"/>
<rect class="c" x="208" y="645" width="16" height="1" fill="#8e8e8e"/>
<text x="210.4" y="655.5" font-size="10" fill="#f6f6f6" stroke="#f6f6f6" stroke-width="0.2">1</text>
<text x="210.4" y="664.9" font-size="10" fill="#f6f6f6" stroke="#f6f6f6" stroke-width="0.2">7</text>
<text x="210.4" y="674.3" font-size="10" fill="#f6f6f6" stroke="#f6f6f6" stroke-width="0.2">0</text>
<rect class="c" x="221" y="649" width="3" height="1" fill="#8e8e8e"/>
<rect class="c" x="221" y="653" width="3" height="1" fill="#8e8e8e"/>
<rect class="c" x="221" y="657" width="3" height="1" fill="#8e8e8e"/>
<rect class="c" x="221" y="661" width="3" height="1" fill="#8e8e8e"/>
<rect class="c" x="219" y="664" width="5" height="1" fill="#8e8e8e"/>
<rect class="c" x="221" y="668" width="3" height="1" fill="#8e8e8e"/>
<rect class="c" x="221" y="672" width="3" height="1" fill="#8e8e8e"/>
<rect class="c" x="221" y="676" width="3" height="1" fill="#8e8e8e"/>
<rect class="c" x="221" y="680" width="3" height="1" fill="#8e8e8e"/>
<rect class="c" x="208" y="683" width="16" height="1" fill="#8e8e8e"/>
<text x="210.4" y="693.5" font-size="10" fill="#f6f6f6" stroke="#f6f6f6" stroke-width="0.2">1</text>
<text x="210.4" y="702.9" font-size="10" fill="#f6f6f6" stroke="#f6f6f6" stroke-width="0.2">8</text>
<text x="210.4" y="712.3" font-size="10" fill="#f6f6f6" stroke="#f6f6f6" stroke-width="0.2">0</text>
<rect class="c" x="221" y="687" width="3" height="1" fill="#8e8e8e"/>
<rect class="c" x="221" y="691" width="3" height="1" fill="#8e8e8e"/>
<rect class="c" x="221" y="695" width="3" height="1" fill="#8e8e8e"/>
<rect class="c" x="221" y="699" width="3" height="1" fill="#8e8e8e"/>
<rect class="c" x="219" y="702" width="5" height="1" fill="#8e8e8e"/>
<rect class="c" x="221" y="706" width="3" height="1" fill="#8e8e8e"/>
<rect class="c" x="221" y="710" width="3" height="1" fill="#8e8e8e"/>
<rect class="c" x="221" y="714" width="3" height="1" fill="#8e8e8e"/>
<rect class="c" x="221" y="718" width="3" height="1" fill="#8e8e8e"/>
<rect class="c" x="208" y="721" width="16" height="1" fill="#8e8e8e"/>
<text x="210.4" y="731.5" font-size="10" fill="#f6f6f6" stroke="#f6f6f6" stroke-width="0.2">1</text>
<text x="210.4" y="740.9" font-size="10" fill="#f6f6f6" stroke="#f6f6f6" stroke-width="0.2">9</text>
<text x="210.4" y="750.3" font-size="10" fill="#f6f6f6" stroke="#f6f6f6" stroke-width="0.2">0</text>
<rect class="c" x="221" y="725" width="3" height="1" fill="#8e8e8e"/>
<rect class="c" x="221" y="729" width="3" height="1" fill="#8e8e8e"/>
<rect class="c" x="221" y="733" width="3" height="1" fill="#8e8e8e"/>
<rect class="c" x="221" y="737" width="3" height="1" fill="#8e8e8e"/>
<rect class="c" x="219" y="740" width="5" height="1" fill="#8e8e8e"/>
<rect class="c" x="221" y="744" width="3" height="1" fill="#8e8e8e"/>
<rect class="c" x="221" y="748" width="3" height="1" fill="#8e8e8e"/>
<rect class="c" x="221" y="752" width="3" height="1" fill="#8e8e8e"/>
<rect class="c" x="221" y="756" width="3" height="1" fill="#8e8e8e"/>
<rect class="c" x="208" y="759" width="16" height="1" fill="#8e8e8e"/>
<text x="210.4" y="769.5" font-size="10" fill="#f6f6f6" stroke="#f6f6f6" stroke-width="0.2">2</text>
<text x="210.4" y="778.9" font-size="10" fill="#f6f6f6" stroke="#f6f6f6" stroke-width="0.2">0</text>
<text x="210.4" y="788.3" font-size="10" fill="#f6f6f6" stroke="#f6f6f6" stroke-width="0.2">0</text>
<rect class="c" x="221" y="763" width="3" height="1" fill="#8e8e8e"/>
<rect class="c" x="221" y="767" width="3" height="1" fill="#8e8e8e"/>
<rect class="c" x="221" y="771" width="3" height="1" fill="#8e8e8e"/>
<rect class="c" x="221" y="775" width="3" height="1" fill="#8e8e8e"/>
<rect class="c" x="219" y="778" width="5" height="1" fill="#8e8e8e"/>
<rect class="c" x="221" y="782" width="3" height="1" fill="#8e8e8e"/>
<rect class="c" x="221" y="786" width="3" height="1" fill="#8e8e8e"/>
<rect class="c" x="221" y="790" width="3" height="1" fill="#8e8e8e"/>
<rect class="c" x="221" y="794" width="3" height="1" fill="#8e8e8e"/>
<rect class="c" x="208" y="797" width="16" height="1" fill="#8e8e8e"/>
<text x="210.4" y="807.5" font-size="10" fill="#f6f6f6" stroke="#f6f6f6" stroke-width="0.2">2</text>
<text x="210.4" y="816.9" font-size="10" fill="#f6f6f6" stroke="#f6f6f6" stroke-width="0.2">1</text>
<text x="210.4" y="826.3" font-size="10" fill="#f6f6f6" stroke="#f6f6f6" stroke-width="0.2">0</text>
<rect class="c" x="221" y="801" width="3" height="1" fill="#8e8e8e"/>
<rect class="c" x="221" y="805" width="3" height="1" fill="#8e8e8e"/>
<rect class="c" x="221" y="809" width="3" height="1" fill="#8e8e8e"/>
<rect class="c" x="221" y="813" width="3" height="1" fill="#8e8e8e"/>
<rect class="c" x="219" y="816" width="5" height="1" fill="#8e8e8e"/>
<rect class="c" x="221" y="820" width="3" height="1" fill="#8e8e8e"/>
<rect class="c" x="223" y="1" width="1" height="822" fill="#8e8e8e"/>
<rect class="c" x="208" y="5" width="1" height="1" fill="#a8a8a8"/>
<rect class="c" x="210" y="5" width="1" height="1" fill="#a8a8a8"/>
<rect class="c" x="212" y="5" width="1" height="1" fill="#a8a8a8"/>
<rect class="c" x="214" y="5" width="1" height="1" fill="#a8a8a8"/>
<rect class="c" x="216" y="5" width="1" height="1" fill="#a8a8a8"/>
<rect class="c" x="218" y="5" width="1" height="1" fill="#a8a8a8"/>
<rect class="c" x="220" y="5" width="1" height="1" fill="#a8a8a8"/>
<rect class="c" x="222" y="5" width="1" height="1" fill="#a8a8a8"/>
<rect class="c" x="212" y="1" width="1" height="1" fill="#a8a8a8"/>
<rect class="c" x="212" y="3" width="1" height="1" fill="#a8a8a8"/>
<rect class="c" x="212" y="5" width="1" height="1" fill="#a8a8a8"/>
<rect class="c" x="212" y="7" width="1" height="1" fill="#a8a8a8"/>
<rect class="c" x="212" y="9" width="1" height="1" fill="#a8a8a8"/>
<rect class="c" x="212" y="11" width="1" height="1" fill="#a8a8a8"/>
<rect class="c" x="212" y="13" width="1" height="1" fill="#a8a8a8"/>
<rect class="c" x="212" y="15" width="1" height="1" fill="#a8a8a8"/>
<rect class="c" x="0" y="1" width="208" height="822" fill="#4a4a4a"/>
<rect class="c" x="0" y="29" width="203" height="794" fill="#e3e3e3"/>
<rect class="c" x="0" y="0" width="208" height="1" fill="#2d2d2d"/>
<text x="6.6" y="18.9" font-size="11.4" fill="#fff" stroke="#fff" stroke-width="0.45" textLength="39.6" lengthAdjust="spacingAndGlyphs">Struktur</text>
<path d="M68.7 8L64.4 12.5H70.8L66.2 17.2" stroke="#cdcdcd" stroke-width="1" fill="none"/>
<path d="M64.8 14.8V18.2H68.2Z" fill="#d4d4d4"/>
<circle cx="94.9" cy="13" r="4.05" fill="#878787"/>
<rect class="c" x="118.5" y="8.5" width="10" height="10" fill="none" stroke="#8c8c8c" stroke-width="1"/>
<path class="c" d="M121 13.5H126M123.5 11V16" stroke="#8c8c8c" stroke-width="1" fill="none"/>
<path d="M145 9.5H156M148.3 9.3C148.3 6.6 152.7 6.6 152.7 9.3M146.5 9.5V18.4H154.5V9.5M148.5 11V17M150.5 11V17M152.5 11V17" stroke="#8c8c8c" stroke-width="1" fill="none"/>
<rect class="c" x="183" y="10" width="12" height="1" fill="#dadada"/>
<rect class="c" x="183" y="13" width="12" height="1" fill="#dadada"/>
<rect class="c" x="183" y="16" width="12" height="1" fill="#dadada"/>
<rect x="18.6" y="31.65" width="13.8" height="13.7" fill="#e5e5e5" stroke="#bababa" stroke-width="1.2"/>
<path d="M27.30 38.60L29.90 38.60" stroke="#bcbcbc" stroke-width="1" fill="none"/>
<path d="M27.34 40.44L28.54 41.64" stroke="#d0d0d0" stroke-width="1" fill="none"/>
<path d="M25.50 40.40L25.50 43.00" stroke="#bcbcbc" stroke-width="1" fill="none"/>
<path d="M23.66 40.44L22.46 41.64" stroke="#d0d0d0" stroke-width="1" fill="none"/>
<path d="M23.70 38.60L21.10 38.60" stroke="#bcbcbc" stroke-width="1" fill="none"/>
<path d="M23.66 36.76L22.46 35.56" stroke="#d0d0d0" stroke-width="1" fill="none"/>
<path d="M25.50 36.80L25.50 34.20" stroke="#bcbcbc" stroke-width="1" fill="none"/>
<path d="M27.34 36.76L28.54 35.56" stroke="#d0d0d0" stroke-width="1" fill="none"/>
<text x="42.4" y="42.7" font-size="11" fill="#000" stroke="#000" stroke-width="0.3" textLength="85.5" lengthAdjust="spacingAndGlyphs">DOCTYPE PFBlock</text>
<rect x="18.6" y="52.65" width="13.8" height="13.7" fill="#e5e5e5" stroke="#bababa" stroke-width="1.2"/>
<path d="M24.2 57.1L21.2 59.6L24.2 62.1M26.8 57.1L29.8 59.6L26.8 62.1" stroke="#c2c2c2" stroke-width="1" fill="none"/>
<path d="M2.4 59.1L6.1 62.5L9.8 59.1" stroke="#b0b0b0" stroke-width="1" fill="none"/>
<text x="42.4" y="63.7" font-size="11" fill="#000" stroke="#000" stroke-width="0.3" textLength="22.4" lengthAdjust="spacingAndGlyphs">Root</text>
<path d="M26.3 78.3L29.7 81.7L26.3 85.1" stroke="#b0b0b0" stroke-width="1" fill="none"/>
<rect x="38.6" y="73.65" width="13.8" height="13.7" fill="#e5e5e5" stroke="#bababa" stroke-width="1.2"/>
<path d="M39 74L52 87M52 74L39 87" stroke="#b4b4b4" stroke-width="1" fill="none"/>
<text x="62.2" y="84.7" font-size="11" fill="#000" stroke="#000" stroke-width="0.3" textLength="58.6" lengthAdjust="spacingAndGlyphs">PFContainer</text>
<path d="M51 83.8L53.6 86.4L51 89L48.4 86.4Z" fill="#2680eb"/>
<path d="M26.3 99.3L29.7 102.7L26.3 106.1" stroke="#b0b0b0" stroke-width="1" fill="none"/>
<rect x="38.6" y="94.65" width="13.8" height="13.7" fill="#e5e5e5" stroke="#bababa" stroke-width="1.2"/>
<path d="M39 95L52 108M52 95L39 108" stroke="#b4b4b4" stroke-width="1" fill="none"/>
<text x="62.2" y="105.7" font-size="11" fill="#000" stroke="#000" stroke-width="0.3" textLength="58.6" lengthAdjust="spacingAndGlyphs">PFContainer</text>
<path d="M51 104.8L53.6 107.4L51 110L48.4 107.4Z" fill="#2680eb"/>
<path d="M26.3 120.3L29.7 123.7L26.3 127.1" stroke="#b0b0b0" stroke-width="1" fill="none"/>
<rect x="38.6" y="115.65" width="13.8" height="13.7" fill="#e5e5e5" stroke="#bababa" stroke-width="1.2"/>
<path d="M39 116L52 129M52 116L39 129" stroke="#b4b4b4" stroke-width="1" fill="none"/>
<text x="62.2" y="126.7" font-size="11" fill="#000" stroke="#000" stroke-width="0.3" textLength="58.6" lengthAdjust="spacingAndGlyphs">PFContainer</text>
<path d="M51 125.8L53.6 128.4L51 131L48.4 128.4Z" fill="#2680eb"/>
<path d="M26.3 141.3L29.7 144.7L26.3 148.1" stroke="#b0b0b0" stroke-width="1" fill="none"/>
<rect x="38.6" y="136.65" width="13.8" height="13.7" fill="#e5e5e5" stroke="#bababa" stroke-width="1.2"/>
<path d="M39 137L52 150M52 137L39 150" stroke="#b4b4b4" stroke-width="1" fill="none"/>
<text x="62.2" y="147.7" font-size="11" fill="#000" stroke="#000" stroke-width="0.3" textLength="58.6" lengthAdjust="spacingAndGlyphs">PFContainer</text>
<path d="M51 146.8L53.6 149.4L51 152L48.4 149.4Z" fill="#2680eb"/>
<path d="M26.3 162.3L29.7 165.7L26.3 169.1" stroke="#b0b0b0" stroke-width="1" fill="none"/>
<rect x="38.6" y="157.65" width="13.8" height="13.7" fill="#e5e5e5" stroke="#bababa" stroke-width="1.2"/>
<path d="M39 158L52 171M52 158L39 171" stroke="#b4b4b4" stroke-width="1" fill="none"/>
<text x="62.2" y="168.7" font-size="11" fill="#000" stroke="#000" stroke-width="0.3" textLength="58.6" lengthAdjust="spacingAndGlyphs">PFContainer</text>
<path d="M51 167.8L53.6 170.4L51 173L48.4 170.4Z" fill="#2680eb"/>
<path d="M26.3 183.3L29.7 186.7L26.3 190.1" stroke="#b0b0b0" stroke-width="1" fill="none"/>
<rect x="38.6" y="178.65" width="13.8" height="13.7" fill="#e5e5e5" stroke="#bababa" stroke-width="1.2"/>
<path d="M39 179L52 192M52 179L39 192" stroke="#b4b4b4" stroke-width="1" fill="none"/>
<text x="62.2" y="189.7" font-size="11" fill="#000" stroke="#000" stroke-width="0.3" textLength="58.6" lengthAdjust="spacingAndGlyphs">PFContainer</text>
<path d="M51 188.8L53.6 191.4L51 194L48.4 191.4Z" fill="#2680eb"/>
<path d="M26.3 204.3L29.7 207.7L26.3 211.1" stroke="#b0b0b0" stroke-width="1" fill="none"/>
<rect x="38.6" y="199.65" width="13.8" height="13.7" fill="#e5e5e5" stroke="#bababa" stroke-width="1.2"/>
<path d="M39 200L52 213M52 200L39 213" stroke="#b4b4b4" stroke-width="1" fill="none"/>
<text x="62.2" y="210.7" font-size="11" fill="#000" stroke="#000" stroke-width="0.3" textLength="58.6" lengthAdjust="spacingAndGlyphs">PFContainer</text>
<path d="M51 209.8L53.6 212.4L51 215L48.4 212.4Z" fill="#2680eb"/>
<path d="M26.3 225.3L29.7 228.7L26.3 232.1" stroke="#b0b0b0" stroke-width="1" fill="none"/>
<rect x="38.6" y="220.65" width="13.8" height="13.7" fill="#e5e5e5" stroke="#bababa" stroke-width="1.2"/>
<path d="M39 221L52 234M52 221L39 234" stroke="#b4b4b4" stroke-width="1" fill="none"/>
<text x="62.2" y="231.7" font-size="11" fill="#000" stroke="#000" stroke-width="0.3" textLength="58.6" lengthAdjust="spacingAndGlyphs">PFContainer</text>
<path d="M51 230.8L53.6 233.4L51 236L48.4 233.4Z" fill="#2680eb"/>
<path d="M26.3 246.3L29.7 249.7L26.3 253.1" stroke="#b0b0b0" stroke-width="1" fill="none"/>
<rect x="38.6" y="241.65" width="13.8" height="13.7" fill="#e5e5e5" stroke="#bababa" stroke-width="1.2"/>
<path d="M39 242L52 255M52 242L39 255" stroke="#b4b4b4" stroke-width="1" fill="none"/>
<text x="62.2" y="252.7" font-size="11" fill="#000" stroke="#000" stroke-width="0.3" textLength="58.6" lengthAdjust="spacingAndGlyphs">PFContainer</text>
<path d="M51 251.8L53.6 254.4L51 257L48.4 254.4Z" fill="#2680eb"/>
<path d="M26.3 267.3L29.7 270.7L26.3 274.1" stroke="#b0b0b0" stroke-width="1" fill="none"/>
<rect x="38.6" y="262.65" width="13.8" height="13.7" fill="#e5e5e5" stroke="#bababa" stroke-width="1.2"/>
<path d="M39 263L52 276M52 263L39 276" stroke="#b4b4b4" stroke-width="1" fill="none"/>
<text x="62.2" y="273.7" font-size="11" fill="#000" stroke="#000" stroke-width="0.3" textLength="58.6" lengthAdjust="spacingAndGlyphs">PFContainer</text>
<path d="M51 272.8L53.6 275.4L51 278L48.4 275.4Z" fill="#2680eb"/>
<path d="M26.3 288.3L29.7 291.7L26.3 295.1" stroke="#b0b0b0" stroke-width="1" fill="none"/>
<rect x="38.6" y="283.65" width="13.8" height="13.7" fill="#e5e5e5" stroke="#bababa" stroke-width="1.2"/>
<path d="M39 284L52 297M52 284L39 297" stroke="#b4b4b4" stroke-width="1" fill="none"/>
<text x="62.2" y="294.7" font-size="11" fill="#000" stroke="#000" stroke-width="0.3" textLength="58.6" lengthAdjust="spacingAndGlyphs">PFContainer</text>
<path d="M51 293.8L53.6 296.4L51 299L48.4 296.4Z" fill="#2680eb"/>
<path d="M26.3 309.3L29.7 312.7L26.3 316.1" stroke="#b0b0b0" stroke-width="1" fill="none"/>
<rect x="38.6" y="304.65" width="13.8" height="13.7" fill="#e5e5e5" stroke="#bababa" stroke-width="1.2"/>
<path d="M39 305L52 318M52 305L39 318" stroke="#b4b4b4" stroke-width="1" fill="none"/>
<text x="62.2" y="315.7" font-size="11" fill="#000" stroke="#000" stroke-width="0.3" textLength="58.6" lengthAdjust="spacingAndGlyphs">PFContainer</text>
<path d="M51 314.8L53.6 317.4L51 320L48.4 317.4Z" fill="#2680eb"/>
<path d="M26.3 330.3L29.7 333.7L26.3 337.1" stroke="#b0b0b0" stroke-width="1" fill="none"/>
<rect x="38.6" y="325.65" width="13.8" height="13.7" fill="#e5e5e5" stroke="#bababa" stroke-width="1.2"/>
<path d="M39 326L52 339M52 326L39 339" stroke="#b4b4b4" stroke-width="1" fill="none"/>
<text x="62.2" y="336.7" font-size="11" fill="#000" stroke="#000" stroke-width="0.3" textLength="58.6" lengthAdjust="spacingAndGlyphs">PFContainer</text>
<path d="M51 335.8L53.6 338.4L51 341L48.4 338.4Z" fill="#2680eb"/>
<path d="M26.3 351.3L29.7 354.7L26.3 358.1" stroke="#b0b0b0" stroke-width="1" fill="none"/>
<rect x="38.6" y="346.65" width="13.8" height="13.7" fill="#e5e5e5" stroke="#bababa" stroke-width="1.2"/>
<path d="M39 347L52 360M52 347L39 360" stroke="#b4b4b4" stroke-width="1" fill="none"/>
<text x="62.2" y="357.7" font-size="11" fill="#000" stroke="#000" stroke-width="0.3" textLength="58.6" lengthAdjust="spacingAndGlyphs">PFContainer</text>
<path d="M51 356.8L53.6 359.4L51 362L48.4 359.4Z" fill="#2680eb"/>
<path d="M26.3 372.3L29.7 375.7L26.3 379.1" stroke="#b0b0b0" stroke-width="1" fill="none"/>
<rect x="38.6" y="367.65" width="13.8" height="13.7" fill="#e5e5e5" stroke="#bababa" stroke-width="1.2"/>
<path d="M39 368L52 381M52 368L39 381" stroke="#b4b4b4" stroke-width="1" fill="none"/>
<text x="62.2" y="378.7" font-size="11" fill="#000" stroke="#000" stroke-width="0.3" textLength="58.6" lengthAdjust="spacingAndGlyphs">PFContainer</text>
<path d="M51 377.8L53.6 380.4L51 383L48.4 380.4Z" fill="#2680eb"/>
<path d="M26.3 393.3L29.7 396.7L26.3 400.1" stroke="#b0b0b0" stroke-width="1" fill="none"/>
<rect x="38.6" y="388.65" width="13.8" height="13.7" fill="#e5e5e5" stroke="#bababa" stroke-width="1.2"/>
<path d="M39 389L52 402M52 389L39 402" stroke="#b4b4b4" stroke-width="1" fill="none"/>
<text x="62.2" y="399.7" font-size="11" fill="#000" stroke="#000" stroke-width="0.3" textLength="58.6" lengthAdjust="spacingAndGlyphs">PFContainer</text>
<path d="M51 398.8L53.6 401.4L51 404L48.4 401.4Z" fill="#2680eb"/>
<path d="M26.3 414.3L29.7 417.7L26.3 421.1" stroke="#b0b0b0" stroke-width="1" fill="none"/>
<rect x="38.6" y="409.65" width="13.8" height="13.7" fill="#e5e5e5" stroke="#bababa" stroke-width="1.2"/>
<path d="M39 410L52 423M52 410L39 423" stroke="#b4b4b4" stroke-width="1" fill="none"/>
<text x="62.2" y="420.7" font-size="11" fill="#000" stroke="#000" stroke-width="0.3" textLength="58.6" lengthAdjust="spacingAndGlyphs">PFContainer</text>
<path d="M51 419.8L53.6 422.4L51 425L48.4 422.4Z" fill="#2680eb"/>
<path d="M26.3 435.3L29.7 438.7L26.3 442.1" stroke="#b0b0b0" stroke-width="1" fill="none"/>
<rect x="38.6" y="430.65" width="13.8" height="13.7" fill="#e5e5e5" stroke="#bababa" stroke-width="1.2"/>
<path d="M39 431L52 444M52 431L39 444" stroke="#b4b4b4" stroke-width="1" fill="none"/>
<text x="62.2" y="441.7" font-size="11" fill="#000" stroke="#000" stroke-width="0.3" textLength="58.6" lengthAdjust="spacingAndGlyphs">PFContainer</text>
<path d="M51 440.8L53.6 443.4L51 446L48.4 443.4Z" fill="#2680eb"/>
<path d="M26.3 456.3L29.7 459.7L26.3 463.1" stroke="#b0b0b0" stroke-width="1" fill="none"/>
<rect x="38.6" y="451.65" width="13.8" height="13.7" fill="#e5e5e5" stroke="#bababa" stroke-width="1.2"/>
<path d="M39 452L52 465M52 452L39 465" stroke="#b4b4b4" stroke-width="1" fill="none"/>
<text x="62.2" y="462.7" font-size="11" fill="#000" stroke="#000" stroke-width="0.3" textLength="58.6" lengthAdjust="spacingAndGlyphs">PFContainer</text>
<path d="M51 461.8L53.6 464.4L51 467L48.4 464.4Z" fill="#2680eb"/>
<path d="M26.3 477.3L29.7 480.7L26.3 484.1" stroke="#b0b0b0" stroke-width="1" fill="none"/>
<rect x="38.6" y="472.65" width="13.8" height="13.7" fill="#e5e5e5" stroke="#bababa" stroke-width="1.2"/>
<path d="M39 473L52 486M52 473L39 486" stroke="#b4b4b4" stroke-width="1" fill="none"/>
<text x="62.2" y="483.7" font-size="11" fill="#000" stroke="#000" stroke-width="0.3" textLength="58.6" lengthAdjust="spacingAndGlyphs">PFContainer</text>
<path d="M51 482.8L53.6 485.4L51 488L48.4 485.4Z" fill="#2680eb"/>
<path d="M26.3 498.3L29.7 501.7L26.3 505.1" stroke="#b0b0b0" stroke-width="1" fill="none"/>
<rect x="38.6" y="493.65" width="13.8" height="13.7" fill="#e5e5e5" stroke="#bababa" stroke-width="1.2"/>
<path d="M39 494L52 507M52 494L39 507" stroke="#b4b4b4" stroke-width="1" fill="none"/>
<text x="62.2" y="504.7" font-size="11" fill="#000" stroke="#000" stroke-width="0.3" textLength="58.6" lengthAdjust="spacingAndGlyphs">PFContainer</text>
<path d="M51 503.8L53.6 506.4L51 509L48.4 506.4Z" fill="#2680eb"/>
<path d="M26.3 519.3L29.7 522.7L26.3 526.1" stroke="#b0b0b0" stroke-width="1" fill="none"/>
<rect x="38.6" y="514.65" width="13.8" height="13.7" fill="#e5e5e5" stroke="#bababa" stroke-width="1.2"/>
<path d="M39 515L52 528M52 515L39 528" stroke="#b4b4b4" stroke-width="1" fill="none"/>
<text x="62.2" y="525.7" font-size="11" fill="#000" stroke="#000" stroke-width="0.3" textLength="58.6" lengthAdjust="spacingAndGlyphs">PFContainer</text>
<path d="M51 524.8L53.6 527.4L51 530L48.4 527.4Z" fill="#2680eb"/>
<path d="M26.3 540.3L29.7 543.7L26.3 547.1" stroke="#b0b0b0" stroke-width="1" fill="none"/>
<rect x="38.6" y="535.65" width="13.8" height="13.7" fill="#e5e5e5" stroke="#bababa" stroke-width="1.2"/>
<path d="M39 536L52 549M52 536L39 549" stroke="#b4b4b4" stroke-width="1" fill="none"/>
<text x="62.2" y="546.7" font-size="11" fill="#000" stroke="#000" stroke-width="0.3" textLength="58.6" lengthAdjust="spacingAndGlyphs">PFContainer</text>
<path d="M51 545.8L53.6 548.4L51 551L48.4 548.4Z" fill="#2680eb"/>
<path d="M26.3 561.3L29.7 564.7L26.3 568.1" stroke="#b0b0b0" stroke-width="1" fill="none"/>
<rect x="38.6" y="556.65" width="13.8" height="13.7" fill="#e5e5e5" stroke="#bababa" stroke-width="1.2"/>
<path d="M39 557L52 570M52 557L39 570" stroke="#b4b4b4" stroke-width="1" fill="none"/>
<text x="62.2" y="567.7" font-size="11" fill="#000" stroke="#000" stroke-width="0.3" textLength="58.6" lengthAdjust="spacingAndGlyphs">PFContainer</text>
<path d="M51 566.8L53.6 569.4L51 572L48.4 569.4Z" fill="#2680eb"/>
<path d="M26.3 582.3L29.7 585.7L26.3 589.1" stroke="#b0b0b0" stroke-width="1" fill="none"/>
<rect x="38.6" y="577.65" width="13.8" height="13.7" fill="#e5e5e5" stroke="#bababa" stroke-width="1.2"/>
<path d="M39 578L52 591M52 578L39 591" stroke="#b4b4b4" stroke-width="1" fill="none"/>
<text x="62.2" y="588.7" font-size="11" fill="#000" stroke="#000" stroke-width="0.3" textLength="58.6" lengthAdjust="spacingAndGlyphs">PFContainer</text>
<path d="M51 587.8L53.6 590.4L51 593L48.4 590.4Z" fill="#2680eb"/>
<path d="M26.3 603.3L29.7 606.7L26.3 610.1" stroke="#b0b0b0" stroke-width="1" fill="none"/>
<rect x="38.6" y="598.65" width="13.8" height="13.7" fill="#e5e5e5" stroke="#bababa" stroke-width="1.2"/>
<path d="M40.5 601.5H45M43 601.5V605M41.5 605.5H44.5M47 602.5H50M47 605.5H50M41 608.5H50" stroke="#bebebe" stroke-width="1" fill="none"/>
<text x="62.2" y="609.7" font-size="11" fill="#000" stroke="#000" stroke-width="0.3" textLength="36.4" lengthAdjust="spacingAndGlyphs">PFBlock</text>
<path d="M51 608.8L53.6 611.4L51 614L48.4 611.4Z" fill="#2680eb"/>
<path d="M26.3 624.3L29.7 627.7L26.3 631.1" stroke="#b0b0b0" stroke-width="1" fill="none"/>
<rect x="38.6" y="619.65" width="13.8" height="13.7" fill="#e5e5e5" stroke="#bababa" stroke-width="1.2"/>
<path d="M40.5 622.5H45M43 622.5V626M41.5 626.5H44.5M47 623.5H50M47 626.5H50M41 629.5H50" stroke="#bebebe" stroke-width="1" fill="none"/>
<text x="62.2" y="630.7" font-size="11" fill="#000" stroke="#000" stroke-width="0.3" textLength="36.4" lengthAdjust="spacingAndGlyphs">PFBlock</text>
<path d="M51 629.8L53.6 632.4L51 635L48.4 632.4Z" fill="#2680eb"/>
<path d="M26.3 645.3L29.7 648.7L26.3 652.1" stroke="#b0b0b0" stroke-width="1" fill="none"/>
<rect x="38.6" y="640.65" width="13.8" height="13.7" fill="#e5e5e5" stroke="#bababa" stroke-width="1.2"/>
<path d="M40.5 643.5H45M43 643.5V647M41.5 647.5H44.5M47 644.5H50M47 647.5H50M41 650.5H50" stroke="#bebebe" stroke-width="1" fill="none"/>
<text x="62.2" y="651.7" font-size="11" fill="#000" stroke="#000" stroke-width="0.3" textLength="36.4" lengthAdjust="spacingAndGlyphs">PFBlock</text>
<path d="M51 650.8L53.6 653.4L51 656L48.4 653.4Z" fill="#2680eb"/>
<rect class="c" x="61" y="636" width="41" height="1" fill="#000"/>
</svg>
</body></html>
